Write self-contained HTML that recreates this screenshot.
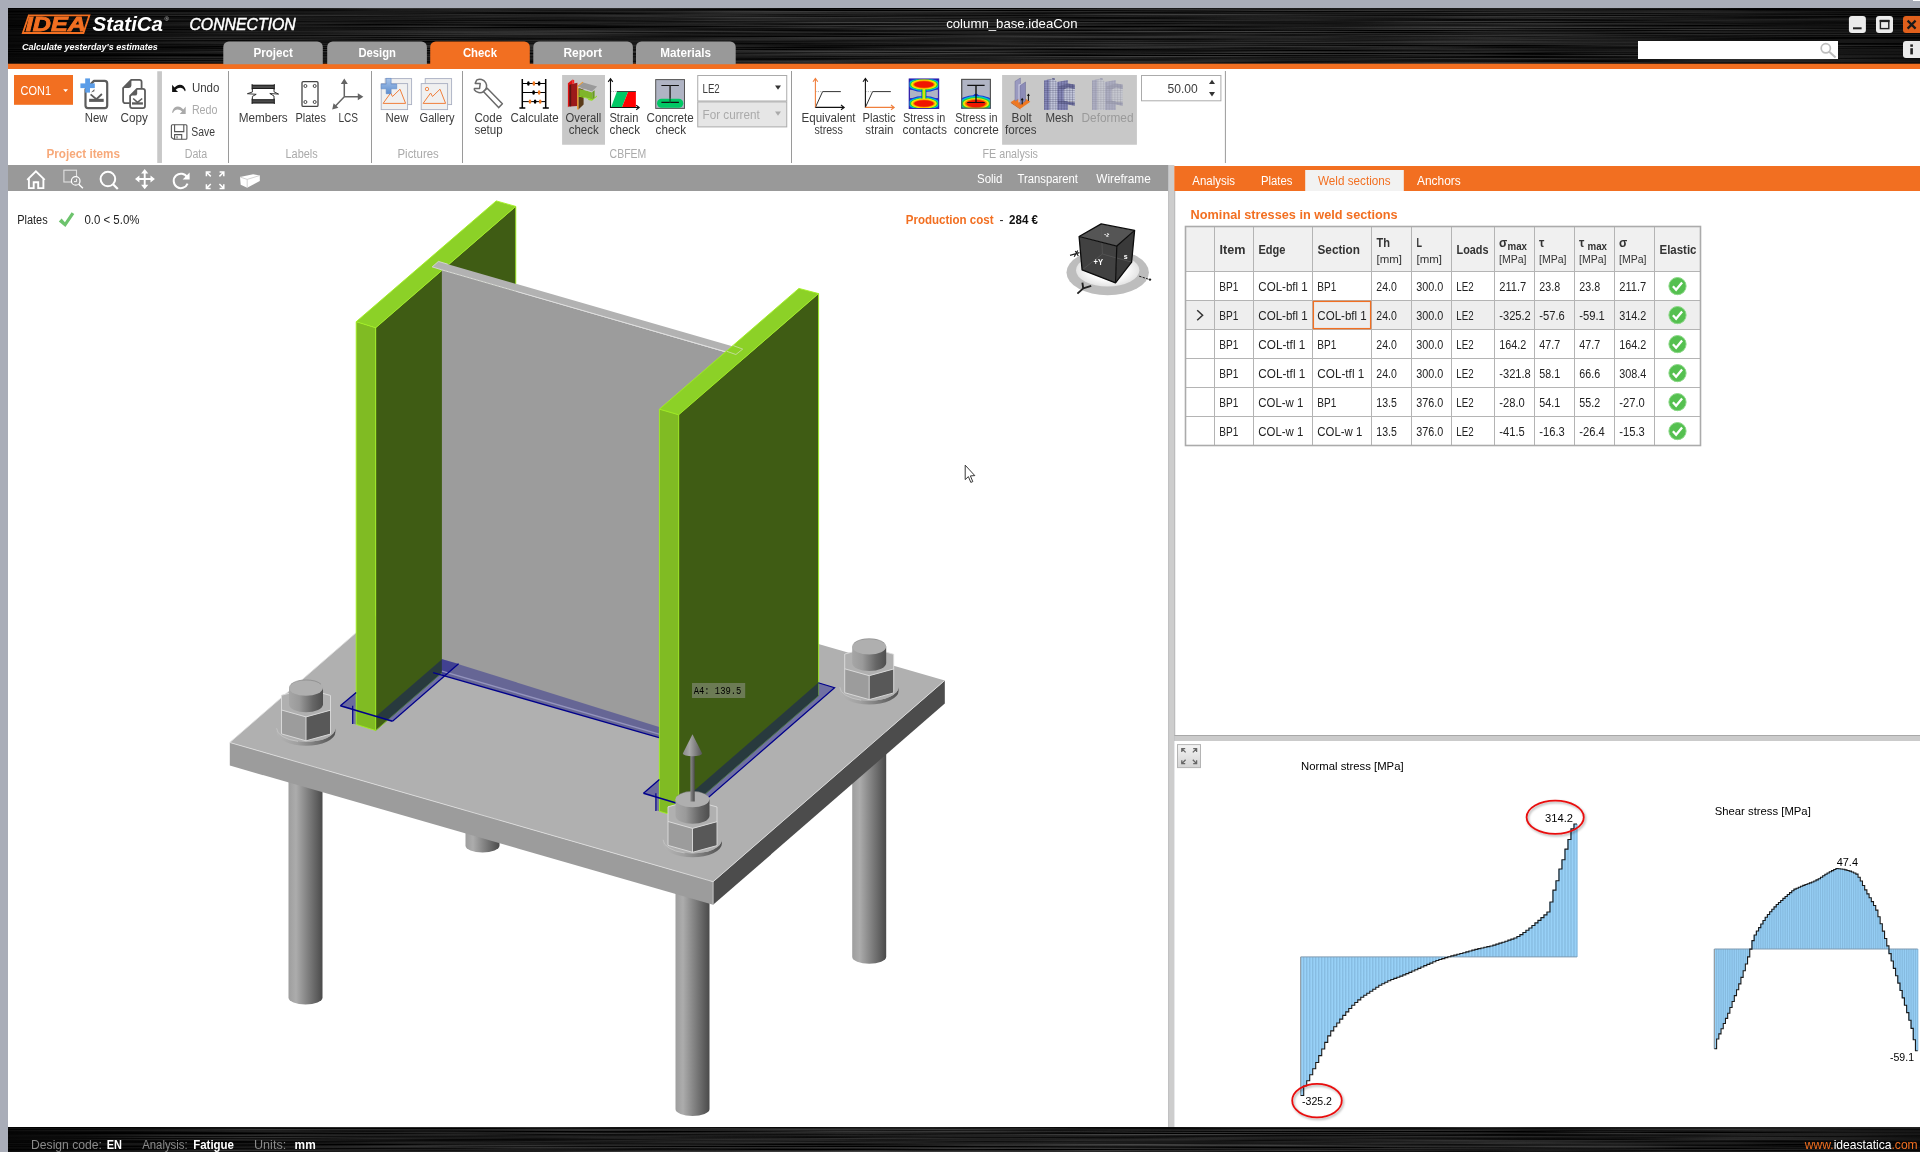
<!DOCTYPE html>
<html lang="en"><head><meta charset="utf-8"><title>IDEA StatiCa Connection - column_base.ideaCon</title>
<style>
html,body{margin:0;padding:0;background:#a9adb8;overflow:hidden}
body{width:1920px;height:1152px;position:relative;font-family:"Liberation Sans",sans-serif}
svg{position:absolute;left:0;top:0;display:block;will-change:transform}
svg text{font-family:"Liberation Sans",sans-serif;white-space:pre}
</style></head><body>
<svg width="1920" height="1152" viewBox="0 0 1920 1152">
<defs><filter id="brush" x="0" y="0" width="100%" height="100%" color-interpolation-filters="sRGB"><feTurbulence type="fractalNoise" baseFrequency="0.003 0.95" numOctaves="3" seed="11" result="n"/><feColorMatrix in="n" type="matrix" values="0.46 0 0 0 -0.11  0.46 0 0 0 -0.11  0.46 0 0 0 -0.11  0 0 0 0 1" /></filter><linearGradient id="hdrg" x1="0" x2="1" y1="0" y2="0"><stop offset="0" stop-color="#000" stop-opacity="0.75"/><stop offset="0.12" stop-color="#000" stop-opacity="0.25"/><stop offset="0.5" stop-color="#000" stop-opacity="0"/><stop offset="0.9" stop-color="#000" stop-opacity="0.2"/><stop offset="1" stop-color="#000" stop-opacity="0.55"/></linearGradient></defs>
<rect x="8.00" y="8.00" width="1912.00" height="56.00" fill="#1a1a1a" />
<rect x="8.00" y="8.00" width="1912.00" height="56.00" fill="#555" filter="url(#brush)"/>
<rect x="8.00" y="8.00" width="1912.00" height="56.00" fill="url(#hdrg)" />
<rect x="8.00" y="63.70" width="1912.00" height="5.30" fill="#f26f21" />
<g transform="translate(22.2,15.3)"><polygon points="6.6,0 67.2,0 61.2,17.7 0.6,17.7" fill="none" stroke="#f26f21" stroke-width="1.8"/><text x="3.6" y="15.9" font-size="21" font-weight="bold" font-style="italic" fill="#f26f21" stroke="#f26f21" stroke-width="0.9" textLength="60" lengthAdjust="spacingAndGlyphs">IDEA</text></g>
<text x="92.50" y="31.30" font-size="21" fill="#fff" textLength="70.50" lengthAdjust="spacingAndGlyphs" font-weight="bold" font-style="italic">StatiCa</text>
<text x="164.60" y="21.20" font-size="6" fill="#ccc">®</text>
<text x="189.40" y="30.00" font-size="15.7" fill="#fff" textLength="106.40" lengthAdjust="spacingAndGlyphs" font-style="italic" stroke="#fff" stroke-width="0.45">CONNECTION</text>
<text x="21.90" y="50.00" font-size="9.6" fill="#fff" textLength="135.80" lengthAdjust="spacingAndGlyphs" font-weight="bold" font-style="italic">Calculate yesterday's estimates</text>
<text x="946.20" y="28.40" font-size="13.5" fill="#fff" textLength="131.30" lengthAdjust="spacingAndGlyphs">column_base.ideaCon</text>
<path d="M223.3,64.2 V47 a5.5,5.5 0 0 1 5.5,-5.5 H317.3 a5.5,5.5 0 0 1 5.5,5.5 V64.2 Z" fill="#999"/>
<text x="253.40" y="56.90" font-size="13" fill="#fff" textLength="39.40" lengthAdjust="spacingAndGlyphs" font-weight="bold">Project</text>
<path d="M327.2,64.2 V47 a5.5,5.5 0 0 1 5.5,-5.5 H421.4 a5.5,5.5 0 0 1 5.5,5.5 V64.2 Z" fill="#999"/>
<text x="358.40" y="56.90" font-size="13" fill="#fff" textLength="37.60" lengthAdjust="spacingAndGlyphs" font-weight="bold">Design</text>
<path d="M430.2,64.2 V47 a5.5,5.5 0 0 1 5.5,-5.5 H524.3 a5.5,5.5 0 0 1 5.5,5.5 V64.2 Z" fill="#f26f21"/>
<text x="462.90" y="56.90" font-size="13" fill="#fff" textLength="34.10" lengthAdjust="spacingAndGlyphs" font-weight="bold">Check</text>
<path d="M533.3,64.2 V47 a5.5,5.5 0 0 1 5.5,-5.5 H627.4 a5.5,5.5 0 0 1 5.5,5.5 V64.2 Z" fill="#999"/>
<text x="563.40" y="56.90" font-size="13" fill="#fff" textLength="38.50" lengthAdjust="spacingAndGlyphs" font-weight="bold">Report</text>
<path d="M636,64.2 V47 a5.5,5.5 0 0 1 5.5,-5.5 H730.2 a5.5,5.5 0 0 1 5.5,5.5 V64.2 Z" fill="#999"/>
<text x="660.30" y="56.90" font-size="13" fill="#fff" textLength="50.70" lengthAdjust="spacingAndGlyphs" font-weight="bold">Materials</text>
<rect x="1913.00" y="0.00" width="7.00" height="1.00" fill="#fff" />
<rect x="1848.90" y="16.00" width="17.00" height="17.00" fill="#ebebeb" rx="3"/>
<rect x="1853.00" y="27.30" width="8.60" height="2.00" fill="#222" />
<rect x="1876.00" y="16.00" width="17.00" height="17.00" fill="#ebebeb" rx="3"/>
<rect x="1880.4" y="20.6" width="8.4" height="8" fill="none" stroke="#222" stroke-width="1.4"/><rect x="1879.70" y="19.90" width="9.80" height="2.20" fill="#222" />
<rect x="1903.00" y="16.00" width="20.00" height="17.00" fill="#e0601c" rx="3"/>
<path d="M1907.6,20.6 L1915.6,28.6 M1915.6,20.6 L1907.6,28.6" stroke="#1a1a1a" stroke-width="2.2" fill="none"/>
<rect x="1638.00" y="41.00" width="200.00" height="18.00" fill="#fff" />
<circle cx="1825.8" cy="48.3" r="4.6" fill="none" stroke="#bdbdbd" stroke-width="1.7"/><path d="M1829,51.6 L1835.6,57.6" stroke="#bdbdbd" stroke-width="2"/>
<rect x="1903.00" y="41.00" width="20.00" height="17.00" fill="#ebebeb" rx="3"/>
<rect x="1910.30" y="48.20" width="2.60" height="6.20" fill="#222" /><rect x="1910.30" y="44.40" width="2.60" height="2.40" fill="#222" />
<rect x="8.00" y="69.00" width="1912.00" height="96.00" fill="#fff" />
<rect x="14.00" y="75.00" width="59.00" height="29.80" fill="#f26f21" />
<text x="20.60" y="94.60" font-size="12" fill="#fff" textLength="30.40" lengthAdjust="spacingAndGlyphs">CON1</text>
<polygon points="63.20,89.20 68.00,89.20 65.60,92.00" fill="#fff" stroke="none" stroke-width="1" />
<text x="84.75" y="122.00" font-size="12" fill="#3c3c3c" textLength="22.75" lengthAdjust="spacingAndGlyphs">New</text>
<text x="120.60" y="122.00" font-size="12" fill="#3c3c3c" textLength="27.30" lengthAdjust="spacingAndGlyphs">Copy</text>
<text x="46.50" y="158.30" font-size="12" fill="#f7a97a" textLength="73.50" lengthAdjust="spacingAndGlyphs" font-weight="bold">Project items</text>
<rect x="157.25" y="71.25" width="4.70" height="91.70" fill="#c8c8c8" />
<text x="191.90" y="92.40" font-size="12" fill="#3c3c3c" textLength="27.50" lengthAdjust="spacingAndGlyphs">Undo</text>
<text x="191.90" y="114.30" font-size="12" fill="#aaa" textLength="25.60" lengthAdjust="spacingAndGlyphs">Redo</text>
<text x="191.25" y="135.90" font-size="12" fill="#3c3c3c" textLength="23.75" lengthAdjust="spacingAndGlyphs">Save</text>
<text x="184.75" y="158.30" font-size="12" fill="#aaa" textLength="22.50" lengthAdjust="spacingAndGlyphs">Data</text>
<line x1="228.50" y1="71.00" x2="228.50" y2="163.00" stroke="#9a9a9a" stroke-width="1" />
<line x1="371.50" y1="71.00" x2="371.50" y2="163.00" stroke="#9a9a9a" stroke-width="1" />
<line x1="462.50" y1="71.00" x2="462.50" y2="163.00" stroke="#9a9a9a" stroke-width="1" />
<line x1="791.50" y1="71.00" x2="791.50" y2="163.00" stroke="#9a9a9a" stroke-width="1" />
<line x1="1225.40" y1="71.00" x2="1225.40" y2="163.00" stroke="#9a9a9a" stroke-width="1" />
<text x="238.75" y="122.00" font-size="12" fill="#3c3c3c" textLength="49.00" lengthAdjust="spacingAndGlyphs">Members</text>
<text x="295.50" y="122.00" font-size="12" fill="#3c3c3c" textLength="30.40" lengthAdjust="spacingAndGlyphs">Plates</text>
<text x="338.40" y="122.00" font-size="12" fill="#3c3c3c" textLength="19.60" lengthAdjust="spacingAndGlyphs">LCS</text>
<text x="285.50" y="158.30" font-size="12" fill="#aaa" textLength="32.25" lengthAdjust="spacingAndGlyphs">Labels</text>
<text x="385.50" y="122.00" font-size="12" fill="#3c3c3c" textLength="22.90" lengthAdjust="spacingAndGlyphs">New</text>
<text x="419.60" y="122.00" font-size="12" fill="#3c3c3c" textLength="35.00" lengthAdjust="spacingAndGlyphs">Gallery</text>
<text x="397.50" y="158.30" font-size="12" fill="#aaa" textLength="41.25" lengthAdjust="spacingAndGlyphs">Pictures</text>
<text x="474.40" y="122.00" font-size="12" fill="#3c3c3c" textLength="27.70" lengthAdjust="spacingAndGlyphs">Code</text>
<text x="474.40" y="134.30" font-size="12" fill="#3c3c3c" textLength="28.20" lengthAdjust="spacingAndGlyphs">setup</text>
<text x="510.60" y="122.00" font-size="12" fill="#3c3c3c" textLength="48.15" lengthAdjust="spacingAndGlyphs">Calculate</text>
<rect x="562.10" y="75.00" width="42.90" height="69.75" fill="#c8c8c8" />
<text x="565.60" y="122.00" font-size="12" fill="#3c3c3c" textLength="35.65" lengthAdjust="spacingAndGlyphs">Overall</text>
<text x="568.75" y="134.30" font-size="12" fill="#3c3c3c" textLength="30.00" lengthAdjust="spacingAndGlyphs">check</text>
<text x="609.40" y="122.00" font-size="12" fill="#3c3c3c" textLength="29.10" lengthAdjust="spacingAndGlyphs">Strain</text>
<text x="609.60" y="134.30" font-size="12" fill="#3c3c3c" textLength="30.40" lengthAdjust="spacingAndGlyphs">check</text>
<text x="646.50" y="122.00" font-size="12" fill="#3c3c3c" textLength="47.25" lengthAdjust="spacingAndGlyphs">Concrete</text>
<text x="655.60" y="134.30" font-size="12" fill="#3c3c3c" textLength="30.40" lengthAdjust="spacingAndGlyphs">check</text>
<text x="609.60" y="158.30" font-size="12" fill="#aaa" textLength="36.65" lengthAdjust="spacingAndGlyphs">CBFEM</text>
<rect x="697.75" y="75.50" width="89.00" height="25.50" fill="#fff" stroke="#ababab" stroke-width="1"/>
<text x="702.50" y="92.50" font-size="12" fill="#3c3c3c" textLength="17.25" lengthAdjust="spacingAndGlyphs">LE2</text>
<polygon points="775.00,85.40 781.00,85.40 778.00,89.80" fill="#333" stroke="none" stroke-width="1" />
<rect x="697.75" y="101.90" width="89.00" height="25.00" fill="#e6e6e6" stroke="#ababab" stroke-width="1"/>
<text x="702.50" y="118.50" font-size="12" fill="#aaa" textLength="57.25" lengthAdjust="spacingAndGlyphs">For current</text>
<polygon points="775.00,111.40 781.00,111.40 778.00,115.80" fill="#aaa" stroke="none" stroke-width="1" />
<text x="801.50" y="122.00" font-size="12" fill="#3c3c3c" textLength="54.10" lengthAdjust="spacingAndGlyphs">Equivalent</text>
<text x="814.40" y="134.30" font-size="12" fill="#3c3c3c" textLength="28.35" lengthAdjust="spacingAndGlyphs">stress</text>
<text x="862.50" y="122.00" font-size="12" fill="#3c3c3c" textLength="33.10" lengthAdjust="spacingAndGlyphs">Plastic</text>
<text x="865.25" y="134.30" font-size="12" fill="#3c3c3c" textLength="28.25" lengthAdjust="spacingAndGlyphs">strain</text>
<text x="903.10" y="122.00" font-size="12" fill="#3c3c3c" textLength="42.15" lengthAdjust="spacingAndGlyphs">Stress in</text>
<text x="902.50" y="134.30" font-size="12" fill="#3c3c3c" textLength="44.40" lengthAdjust="spacingAndGlyphs">contacts</text>
<text x="955.25" y="122.00" font-size="12" fill="#3c3c3c" textLength="42.25" lengthAdjust="spacingAndGlyphs">Stress in</text>
<text x="953.75" y="134.30" font-size="12" fill="#3c3c3c" textLength="45.00" lengthAdjust="spacingAndGlyphs">concrete</text>
<rect x="1002.10" y="75.00" width="134.80" height="69.75" fill="#c8c8c8" />
<text x="1011.50" y="122.00" font-size="12" fill="#3c3c3c" textLength="20.40" lengthAdjust="spacingAndGlyphs">Bolt</text>
<text x="1005.00" y="134.30" font-size="12" fill="#3c3c3c" textLength="31.50" lengthAdjust="spacingAndGlyphs">forces</text>
<text x="1045.40" y="122.00" font-size="12" fill="#3c3c3c" textLength="28.10" lengthAdjust="spacingAndGlyphs">Mesh</text>
<text x="1081.50" y="122.00" font-size="12" fill="#9a9a9a" textLength="52.00" lengthAdjust="spacingAndGlyphs">Deformed</text>
<text x="982.50" y="158.30" font-size="12" fill="#aaa" textLength="55.40" lengthAdjust="spacingAndGlyphs">FE analysis</text>
<rect x="1141.50" y="75.50" width="79.40" height="25.30" fill="#fff" stroke="#ababab" stroke-width="1"/>
<text x="1167.50" y="92.50" font-size="12" fill="#3c3c3c" textLength="30.25" lengthAdjust="spacingAndGlyphs">50.00</text>
<polygon points="1209.00,84.10 1215.00,84.10 1212.00,79.70" fill="#333" stroke="none" stroke-width="1" />
<polygon points="1209.00,92.00 1215.00,92.00 1212.00,96.60" fill="#333" stroke="none" stroke-width="1" />
<rect x="8.00" y="165.00" width="1160.30" height="26.00" fill="#999" />
<text x="977.00" y="183.00" font-size="12" fill="#fff" textLength="25.50" lengthAdjust="spacingAndGlyphs">Solid</text>
<text x="1017.50" y="183.00" font-size="12" fill="#fff" textLength="60.50" lengthAdjust="spacingAndGlyphs">Transparent</text>
<text x="1096.25" y="183.00" font-size="12" fill="#fff" textLength="54.50" lengthAdjust="spacingAndGlyphs">Wireframe</text>
<rect x="8.00" y="191.00" width="1160.30" height="937.00" fill="#fff" />
<rect x="1168.30" y="165.00" width="6.00" height="962.50" fill="#cdcdcd" />
<rect x="1168.30" y="191.00" width="0.80" height="936.50" fill="#bdbdbd" />
<rect x="1174.30" y="165.00" width="746.00" height="570.50" fill="#fff" />
<rect x="1174.30" y="166.00" width="746.00" height="25.00" fill="#f26f21" />
<rect x="1174.30" y="191.00" width="0.90" height="545.00" fill="#a8a8a8" />
<rect x="1305.20" y="170.00" width="98.60" height="21.00" fill="#f2f2f2" />
<text x="1192.30" y="185.20" font-size="12" fill="#fff" textLength="42.70" lengthAdjust="spacingAndGlyphs">Analysis</text>
<text x="1261.00" y="185.20" font-size="12" fill="#fff" textLength="31.30" lengthAdjust="spacingAndGlyphs">Plates</text>
<text x="1318.00" y="185.20" font-size="12" fill="#f26f21" textLength="72.60" lengthAdjust="spacingAndGlyphs">Weld sections</text>
<text x="1417.00" y="185.20" font-size="12" fill="#fff" textLength="43.80" lengthAdjust="spacingAndGlyphs">Anchors</text>
<text x="1190.60" y="218.60" font-size="13" fill="#f26f21" textLength="207.10" lengthAdjust="spacingAndGlyphs" font-weight="bold">Nominal stresses in weld sections</text>
<rect x="1174.30" y="735.00" width="746.00" height="6.00" fill="#cbcbcb" />
<rect x="1174.30" y="735.00" width="746.00" height="1.00" fill="#a8a8a8" />
<rect x="1174.30" y="741.00" width="746.00" height="386.50" fill="#fff" />
<rect x="8.00" y="1127.40" width="1912.00" height="24.60" fill="#141414" />
<rect x="8.00" y="1127.40" width="1912.00" height="24.60" fill="#555" filter="url(#brush)"/>
<rect x="8.00" y="1127.40" width="1912.00" height="24.60" fill="url(#hdrg)" />
<text x="31.00" y="1149.30" font-size="12" fill="#8a8a8a" textLength="71.00" lengthAdjust="spacingAndGlyphs">Design code:</text>
<text x="106.80" y="1149.30" font-size="12" fill="#fff" textLength="15.20" lengthAdjust="spacingAndGlyphs" font-weight="bold">EN</text>
<text x="142.20" y="1149.30" font-size="12" fill="#8a8a8a" textLength="45.50" lengthAdjust="spacingAndGlyphs">Analysis:</text>
<text x="193.20" y="1149.30" font-size="12" fill="#fff" textLength="40.80" lengthAdjust="spacingAndGlyphs" font-weight="bold">Fatigue</text>
<text x="254.00" y="1149.30" font-size="12" fill="#8a8a8a" textLength="32.20" lengthAdjust="spacingAndGlyphs">Units:</text>
<text x="294.60" y="1149.30" font-size="12" fill="#fff" textLength="21.10" lengthAdjust="spacingAndGlyphs" font-weight="bold">mm</text>
<text x="1804.8" y="1149.4" font-size="13" textLength="112.9" lengthAdjust="spacingAndGlyphs"><tspan fill="#f26f21">www.</tspan><tspan fill="#fff">ideastatica</tspan><tspan fill="#f26f21">.com</tspan></text>
<text x="17.20" y="223.75" font-size="12" fill="#222" textLength="30.50" lengthAdjust="spacingAndGlyphs">Plates</text>
<text x="84.40" y="223.75" font-size="12" fill="#222" textLength="55.10" lengthAdjust="spacingAndGlyphs">0.0 &lt; 5.0%</text>
<path d="M58.8,221.4 L61.6,218.6 L64.9,222.2 L71.6,212.2 L74.3,213.9 L65.4,227.1 Z" fill="#6dc36d"/>
<text x="905.80" y="223.70" font-size="12" fill="#f26f21" textLength="87.80" lengthAdjust="spacingAndGlyphs" font-weight="bold">Production cost</text>
<text x="999.60" y="223.70" font-size="12" fill="#222">-</text>
<text x="1009.00" y="223.70" font-size="12" fill="#111" textLength="29.00" lengthAdjust="spacingAndGlyphs" font-weight="bold">284 €</text>
<rect x="1185.50" y="226.50" width="515.00" height="219.00" fill="#fff" />
<rect x="1185.50" y="226.50" width="515.00" height="45.00" fill="#f0f0f0" />
<rect x="1185.50" y="300.50" width="515.00" height="29.00" fill="#eeeeee" />
<line x1="1214.50" y1="226.50" x2="1214.50" y2="445.50" stroke="#b4b4b4" stroke-width="1" />
<line x1="1253.50" y1="226.50" x2="1253.50" y2="445.50" stroke="#b4b4b4" stroke-width="1" />
<line x1="1312.50" y1="226.50" x2="1312.50" y2="445.50" stroke="#b4b4b4" stroke-width="1" />
<line x1="1371.50" y1="226.50" x2="1371.50" y2="445.50" stroke="#b4b4b4" stroke-width="1" />
<line x1="1411.50" y1="226.50" x2="1411.50" y2="445.50" stroke="#b4b4b4" stroke-width="1" />
<line x1="1451.50" y1="226.50" x2="1451.50" y2="445.50" stroke="#b4b4b4" stroke-width="1" />
<line x1="1494.50" y1="226.50" x2="1494.50" y2="445.50" stroke="#b4b4b4" stroke-width="1" />
<line x1="1534.50" y1="226.50" x2="1534.50" y2="445.50" stroke="#b4b4b4" stroke-width="1" />
<line x1="1574.50" y1="226.50" x2="1574.50" y2="445.50" stroke="#b4b4b4" stroke-width="1" />
<line x1="1614.50" y1="226.50" x2="1614.50" y2="445.50" stroke="#b4b4b4" stroke-width="1" />
<line x1="1654.50" y1="226.50" x2="1654.50" y2="445.50" stroke="#b4b4b4" stroke-width="1" />
<line x1="1185.50" y1="271.50" x2="1700.50" y2="271.50" stroke="#b4b4b4" stroke-width="1" />
<line x1="1185.50" y1="300.50" x2="1700.50" y2="300.50" stroke="#b4b4b4" stroke-width="1" />
<line x1="1185.50" y1="329.50" x2="1700.50" y2="329.50" stroke="#b4b4b4" stroke-width="1" />
<line x1="1185.50" y1="358.50" x2="1700.50" y2="358.50" stroke="#b4b4b4" stroke-width="1" />
<line x1="1185.50" y1="387.50" x2="1700.50" y2="387.50" stroke="#b4b4b4" stroke-width="1" />
<line x1="1185.50" y1="416.50" x2="1700.50" y2="416.50" stroke="#b4b4b4" stroke-width="1" />
<rect x="1185.5" y="226.5" width="515.0" height="219.0" fill="none" stroke="#ababab" stroke-width="1.6"/>
<text x="1219.50" y="253.60" font-size="12" fill="#333" textLength="26.00" lengthAdjust="spacingAndGlyphs" font-weight="bold">Item</text>
<text x="1258.50" y="253.60" font-size="12" fill="#333" textLength="27.00" lengthAdjust="spacingAndGlyphs" font-weight="bold">Edge</text>
<text x="1317.50" y="253.60" font-size="12" fill="#333" textLength="42.50" lengthAdjust="spacingAndGlyphs" font-weight="bold">Section</text>
<text x="1456.50" y="253.60" font-size="12" fill="#333" textLength="32.00" lengthAdjust="spacingAndGlyphs" font-weight="bold">Loads</text>
<text x="1659.50" y="253.60" font-size="12" fill="#333" textLength="37.00" lengthAdjust="spacingAndGlyphs" font-weight="bold">Elastic</text>
<text x="1376.50" y="246.60" font-size="12" fill="#333" textLength="13.50" lengthAdjust="spacingAndGlyphs" font-weight="bold">Th</text>
<text x="1376.50" y="262.80" font-size="10" fill="#333" textLength="25.50" lengthAdjust="spacingAndGlyphs">[mm]</text>
<text x="1416.50" y="246.60" font-size="12" fill="#333" textLength="5.50" lengthAdjust="spacingAndGlyphs" font-weight="bold">L</text>
<text x="1416.50" y="262.80" font-size="10" fill="#333" textLength="25.50" lengthAdjust="spacingAndGlyphs">[mm]</text>
<text x="1499.00" y="246.60" font-size="12" fill="#333" font-weight="bold">σ</text>
<text x="1507.50" y="250.00" font-size="10" fill="#333" textLength="19.50" lengthAdjust="spacingAndGlyphs" font-weight="bold">max</text>
<text x="1499.00" y="262.80" font-size="10" fill="#333" textLength="27.50" lengthAdjust="spacingAndGlyphs">[MPa]</text>
<text x="1539.00" y="246.60" font-size="12" fill="#333" font-weight="bold">τ</text>
<text x="1539.00" y="262.80" font-size="10" fill="#333" textLength="27.50" lengthAdjust="spacingAndGlyphs">[MPa]</text>
<text x="1579.00" y="246.60" font-size="12" fill="#333" font-weight="bold">τ</text>
<text x="1587.50" y="250.00" font-size="10" fill="#333" textLength="19.50" lengthAdjust="spacingAndGlyphs" font-weight="bold">max</text>
<text x="1579.00" y="262.80" font-size="10" fill="#333" textLength="27.50" lengthAdjust="spacingAndGlyphs">[MPa]</text>
<text x="1619.00" y="246.60" font-size="12" fill="#333" font-weight="bold">σ</text>
<text x="1619.00" y="262.80" font-size="10" fill="#333" textLength="27.50" lengthAdjust="spacingAndGlyphs">[MPa]</text>
<text x="1219.30" y="290.60" font-size="12" fill="#222" textLength="19.00" lengthAdjust="spacingAndGlyphs">BP1</text>
<text x="1258.30" y="290.60" font-size="12" fill="#222" textLength="49.50" lengthAdjust="spacingAndGlyphs">COL-bfl 1</text>
<text x="1317.30" y="290.60" font-size="12" fill="#222" textLength="19.00" lengthAdjust="spacingAndGlyphs">BP1</text>
<text x="1376.30" y="290.60" font-size="12" fill="#222" textLength="20.50" lengthAdjust="spacingAndGlyphs">24.0</text>
<text x="1416.30" y="290.60" font-size="12" fill="#222" textLength="27.00" lengthAdjust="spacingAndGlyphs">300.0</text>
<text x="1456.30" y="290.60" font-size="12" fill="#222" textLength="17.30" lengthAdjust="spacingAndGlyphs">LE2</text>
<text x="1499.30" y="290.60" font-size="12" fill="#222" textLength="27.00" lengthAdjust="spacingAndGlyphs">211.7</text>
<text x="1539.30" y="290.60" font-size="12" fill="#222" textLength="20.80" lengthAdjust="spacingAndGlyphs">23.8</text>
<text x="1579.30" y="290.60" font-size="12" fill="#222" textLength="20.80" lengthAdjust="spacingAndGlyphs">23.8</text>
<text x="1619.30" y="290.60" font-size="12" fill="#222" textLength="27.00" lengthAdjust="spacingAndGlyphs">211.7</text>
<circle cx="1677.5" cy="286.1" r="8.6" fill="#55c050"/><circle cx="1677.5" cy="286.1" r="8.6" fill="none" stroke="#8ad886" stroke-width="1"/>
<path d="M1672.9,286.3 L1676.1,289.70000000000005 L1682.1,282.5" fill="none" stroke="#fff" stroke-width="2.3" stroke-linecap="butt"/>
<text x="1219.30" y="319.60" font-size="12" fill="#222" textLength="19.00" lengthAdjust="spacingAndGlyphs">BP1</text>
<text x="1258.30" y="319.60" font-size="12" fill="#222" textLength="49.50" lengthAdjust="spacingAndGlyphs">COL-bfl 1</text>
<text x="1317.30" y="319.60" font-size="12" fill="#222" textLength="49.50" lengthAdjust="spacingAndGlyphs">COL-bfl 1</text>
<text x="1376.30" y="319.60" font-size="12" fill="#222" textLength="20.50" lengthAdjust="spacingAndGlyphs">24.0</text>
<text x="1416.30" y="319.60" font-size="12" fill="#222" textLength="27.00" lengthAdjust="spacingAndGlyphs">300.0</text>
<text x="1456.30" y="319.60" font-size="12" fill="#222" textLength="17.30" lengthAdjust="spacingAndGlyphs">LE2</text>
<text x="1499.30" y="319.60" font-size="12" fill="#222" textLength="31.50" lengthAdjust="spacingAndGlyphs">-325.2</text>
<text x="1539.30" y="319.60" font-size="12" fill="#222" textLength="25.50" lengthAdjust="spacingAndGlyphs">-57.6</text>
<text x="1579.30" y="319.60" font-size="12" fill="#222" textLength="25.50" lengthAdjust="spacingAndGlyphs">-59.1</text>
<text x="1619.30" y="319.60" font-size="12" fill="#222" textLength="27.00" lengthAdjust="spacingAndGlyphs">314.2</text>
<circle cx="1677.5" cy="315.1" r="8.6" fill="#55c050"/><circle cx="1677.5" cy="315.1" r="8.6" fill="none" stroke="#8ad886" stroke-width="1"/>
<path d="M1672.9,315.3 L1676.1,318.70000000000005 L1682.1,311.5" fill="none" stroke="#fff" stroke-width="2.3" stroke-linecap="butt"/>
<text x="1219.30" y="348.60" font-size="12" fill="#222" textLength="19.00" lengthAdjust="spacingAndGlyphs">BP1</text>
<text x="1258.30" y="348.60" font-size="12" fill="#222" textLength="47.00" lengthAdjust="spacingAndGlyphs">COL-tfl 1</text>
<text x="1317.30" y="348.60" font-size="12" fill="#222" textLength="19.00" lengthAdjust="spacingAndGlyphs">BP1</text>
<text x="1376.30" y="348.60" font-size="12" fill="#222" textLength="20.50" lengthAdjust="spacingAndGlyphs">24.0</text>
<text x="1416.30" y="348.60" font-size="12" fill="#222" textLength="27.00" lengthAdjust="spacingAndGlyphs">300.0</text>
<text x="1456.30" y="348.60" font-size="12" fill="#222" textLength="17.30" lengthAdjust="spacingAndGlyphs">LE2</text>
<text x="1499.30" y="348.60" font-size="12" fill="#222" textLength="27.00" lengthAdjust="spacingAndGlyphs">164.2</text>
<text x="1539.30" y="348.60" font-size="12" fill="#222" textLength="20.80" lengthAdjust="spacingAndGlyphs">47.7</text>
<text x="1579.30" y="348.60" font-size="12" fill="#222" textLength="20.80" lengthAdjust="spacingAndGlyphs">47.7</text>
<text x="1619.30" y="348.60" font-size="12" fill="#222" textLength="27.00" lengthAdjust="spacingAndGlyphs">164.2</text>
<circle cx="1677.5" cy="344.1" r="8.6" fill="#55c050"/><circle cx="1677.5" cy="344.1" r="8.6" fill="none" stroke="#8ad886" stroke-width="1"/>
<path d="M1672.9,344.3 L1676.1,347.70000000000005 L1682.1,340.5" fill="none" stroke="#fff" stroke-width="2.3" stroke-linecap="butt"/>
<text x="1219.30" y="377.60" font-size="12" fill="#222" textLength="19.00" lengthAdjust="spacingAndGlyphs">BP1</text>
<text x="1258.30" y="377.60" font-size="12" fill="#222" textLength="47.00" lengthAdjust="spacingAndGlyphs">COL-tfl 1</text>
<text x="1317.30" y="377.60" font-size="12" fill="#222" textLength="47.00" lengthAdjust="spacingAndGlyphs">COL-tfl 1</text>
<text x="1376.30" y="377.60" font-size="12" fill="#222" textLength="20.50" lengthAdjust="spacingAndGlyphs">24.0</text>
<text x="1416.30" y="377.60" font-size="12" fill="#222" textLength="27.00" lengthAdjust="spacingAndGlyphs">300.0</text>
<text x="1456.30" y="377.60" font-size="12" fill="#222" textLength="17.30" lengthAdjust="spacingAndGlyphs">LE2</text>
<text x="1499.30" y="377.60" font-size="12" fill="#222" textLength="31.50" lengthAdjust="spacingAndGlyphs">-321.8</text>
<text x="1539.30" y="377.60" font-size="12" fill="#222" textLength="20.80" lengthAdjust="spacingAndGlyphs">58.1</text>
<text x="1579.30" y="377.60" font-size="12" fill="#222" textLength="20.80" lengthAdjust="spacingAndGlyphs">66.6</text>
<text x="1619.30" y="377.60" font-size="12" fill="#222" textLength="27.00" lengthAdjust="spacingAndGlyphs">308.4</text>
<circle cx="1677.5" cy="373.1" r="8.6" fill="#55c050"/><circle cx="1677.5" cy="373.1" r="8.6" fill="none" stroke="#8ad886" stroke-width="1"/>
<path d="M1672.9,373.3 L1676.1,376.70000000000005 L1682.1,369.5" fill="none" stroke="#fff" stroke-width="2.3" stroke-linecap="butt"/>
<text x="1219.30" y="406.60" font-size="12" fill="#222" textLength="19.00" lengthAdjust="spacingAndGlyphs">BP1</text>
<text x="1258.30" y="406.60" font-size="12" fill="#222" textLength="45.00" lengthAdjust="spacingAndGlyphs">COL-w 1</text>
<text x="1317.30" y="406.60" font-size="12" fill="#222" textLength="19.00" lengthAdjust="spacingAndGlyphs">BP1</text>
<text x="1376.30" y="406.60" font-size="12" fill="#222" textLength="20.50" lengthAdjust="spacingAndGlyphs">13.5</text>
<text x="1416.30" y="406.60" font-size="12" fill="#222" textLength="27.00" lengthAdjust="spacingAndGlyphs">376.0</text>
<text x="1456.30" y="406.60" font-size="12" fill="#222" textLength="17.30" lengthAdjust="spacingAndGlyphs">LE2</text>
<text x="1499.30" y="406.60" font-size="12" fill="#222" textLength="25.50" lengthAdjust="spacingAndGlyphs">-28.0</text>
<text x="1539.30" y="406.60" font-size="12" fill="#222" textLength="20.80" lengthAdjust="spacingAndGlyphs">54.1</text>
<text x="1579.30" y="406.60" font-size="12" fill="#222" textLength="20.80" lengthAdjust="spacingAndGlyphs">55.2</text>
<text x="1619.30" y="406.60" font-size="12" fill="#222" textLength="25.50" lengthAdjust="spacingAndGlyphs">-27.0</text>
<circle cx="1677.5" cy="402.1" r="8.6" fill="#55c050"/><circle cx="1677.5" cy="402.1" r="8.6" fill="none" stroke="#8ad886" stroke-width="1"/>
<path d="M1672.9,402.3 L1676.1,405.70000000000005 L1682.1,398.5" fill="none" stroke="#fff" stroke-width="2.3" stroke-linecap="butt"/>
<text x="1219.30" y="435.60" font-size="12" fill="#222" textLength="19.00" lengthAdjust="spacingAndGlyphs">BP1</text>
<text x="1258.30" y="435.60" font-size="12" fill="#222" textLength="45.00" lengthAdjust="spacingAndGlyphs">COL-w 1</text>
<text x="1317.30" y="435.60" font-size="12" fill="#222" textLength="45.00" lengthAdjust="spacingAndGlyphs">COL-w 1</text>
<text x="1376.30" y="435.60" font-size="12" fill="#222" textLength="20.50" lengthAdjust="spacingAndGlyphs">13.5</text>
<text x="1416.30" y="435.60" font-size="12" fill="#222" textLength="27.00" lengthAdjust="spacingAndGlyphs">376.0</text>
<text x="1456.30" y="435.60" font-size="12" fill="#222" textLength="17.30" lengthAdjust="spacingAndGlyphs">LE2</text>
<text x="1499.30" y="435.60" font-size="12" fill="#222" textLength="25.50" lengthAdjust="spacingAndGlyphs">-41.5</text>
<text x="1539.30" y="435.60" font-size="12" fill="#222" textLength="25.50" lengthAdjust="spacingAndGlyphs">-16.3</text>
<text x="1579.30" y="435.60" font-size="12" fill="#222" textLength="25.50" lengthAdjust="spacingAndGlyphs">-26.4</text>
<text x="1619.30" y="435.60" font-size="12" fill="#222" textLength="25.50" lengthAdjust="spacingAndGlyphs">-15.3</text>
<circle cx="1677.5" cy="431.1" r="8.6" fill="#55c050"/><circle cx="1677.5" cy="431.1" r="8.6" fill="none" stroke="#8ad886" stroke-width="1"/>
<path d="M1672.9,431.3 L1676.1,434.70000000000005 L1682.1,427.5" fill="none" stroke="#fff" stroke-width="2.3" stroke-linecap="butt"/>
<path d="M1197.2,310.2 L1202.6,315.2 L1197.2,320.2" fill="none" stroke="#333" stroke-width="1.5"/>
<rect x="1313.4" y="301.4" width="57.2" height="27.2" fill="none" stroke="#f26f21" stroke-width="1.3"/>
<path d="M94,80.9 H104.6 a2.6,2.6 0 0 1 2.6,2.6 V105.5 a2.6,2.6 0 0 1 -2.6,2.6 H88.1 a2.6,2.6 0 0 1 -2.6,-2.6 V89.4 Z" fill="none" stroke="#5c5c5c" stroke-width="2.2" stroke-linejoin="round"/><rect x="89.10" y="98.80" width="14.60" height="3.10" fill="#5c5c5c" /><path d="M90.6,94.4 L96.4,99.2 L101.9,94" fill="none" stroke="#5c5c5c" stroke-width="1.8"/><path d="M91,92.6 L94.4,91.2 L94.4,89 Z" fill="#5c5c5c"/><rect x="80.40" y="83.40" width="14.40" height="4.70" fill="#5b9de8" /><rect x="85.20" y="78.40" width="4.80" height="14.20" fill="#5b9de8" />
<path d="M131.2,79.9 H139.4 a2.2,2.2 0 0 1 2.2,2.2 V101 a2.2,2.2 0 0 1 -2.2,2.2 H125.3 a2.2,2.2 0 0 1 -2.2,-2.2 V88.2 Z" fill="#fff" stroke="#5c5c5c" stroke-width="1.8" stroke-linejoin="round"/><path d="M123.4,88 L131.4,79.9 V85.6 a2.4,2.4 0 0 1 -2.4,2.4 Z" fill="#5c5c5c"/><path d="M137,88.9 H142.9 a2.1,2.1 0 0 1 2.1,2.1 V106 a2.1,2.1 0 0 1 -2.1,2.1 H132.2 a2.1,2.1 0 0 1 -2.1,-2.1 V95.8 Z" fill="#fff" stroke="#5c5c5c" stroke-width="1.8" stroke-linejoin="round"/><path d="M130.3,95.6 L137.2,88.9 V93.4 a2.2,2.2 0 0 1 -2.2,2.2 Z" fill="#5c5c5c"/><rect x="132.00" y="102.30" width="10.90" height="2.30" fill="#5c5c5c" /><path d="M133.2,98.5 L137.5,102.4 L142.2,98.5" fill="none" stroke="#5c5c5c" stroke-width="1.5"/>
<path d="M0,0.6 L0,7.9 L6,7.9 L3.6,5.6 C6.2,2.9 10.6,2.4 12.6,6.8 C13.2,7.4 13.6,6.4 13.4,5.4 C12.4,0.2 6.2,-1.6 2.4,3.4 Z" fill="#111" transform="translate(172.1,84.2)"/>
<path d="M0,0.6 L0,7.9 L6,7.9 L3.6,5.6 C6.2,2.9 10.6,2.4 12.6,6.8 C13.2,7.4 13.6,6.4 13.4,5.4 C12.4,0.2 6.2,-1.6 2.4,3.4 Z" fill="#aaa" transform="translate(185.7,106) scale(-1,1)"/>
<path d="M172.4,124.7 H185.9 a1,1 0 0 1 1,1 V138.3 a1,1 0 0 1 -1,1 H173.8 L171.4,137.4 V125.7 a1,1 0 0 1 1,-1 Z" fill="#fff" stroke="#555" stroke-width="1.1"/><path d="M174.6,124.7 V131.6 H183.8 V124.7" fill="none" stroke="#555" stroke-width="1.1"/><path d="M174.6,139.3 V134.6 H181.7 V139.3" fill="none" stroke="#555" stroke-width="1.1"/><rect x="176.20" y="136.20" width="1.70" height="2.40" fill="#999" />
<rect x="251.90" y="84.90" width="22.60" height="3.80" fill="#4a4a4a" /><line x1="251.90" y1="85.20" x2="274.50" y2="85.20" stroke="#111" stroke-width="0.8" /><line x1="251.90" y1="88.50" x2="274.50" y2="88.50" stroke="#111" stroke-width="0.9" /><line x1="252.10" y1="84.10" x2="252.10" y2="89.50" stroke="#222" stroke-width="1" /><line x1="274.30" y1="84.10" x2="274.30" y2="89.50" stroke="#222" stroke-width="1" /><rect x="251.90" y="99.40" width="22.60" height="3.80" fill="#4a4a4a" /><line x1="251.90" y1="99.70" x2="274.50" y2="99.70" stroke="#111" stroke-width="0.8" /><line x1="251.90" y1="103.00" x2="274.50" y2="103.00" stroke="#111" stroke-width="0.9" /><line x1="252.10" y1="98.60" x2="252.10" y2="104.00" stroke="#222" stroke-width="1" /><line x1="274.30" y1="98.60" x2="274.30" y2="104.00" stroke="#222" stroke-width="1" /><path d="M252.4,88.8 V92 L247.4,93.7 L256.2,94.3 L252.4,96.4 V99.3" fill="none" stroke="#222" stroke-width="0.9"/><path d="M274,88.8 V91.8 L278.6,94.1 L269.8,93.5 L274,96 V99.3" fill="none" stroke="#222" stroke-width="0.9"/>
<rect x="302" y="81.6" width="16" height="24.8" rx="1.2" fill="#fff" stroke="#444" stroke-width="1.3"/><circle cx="305.4" cy="86" r="1.5" fill="none" stroke="#333" stroke-width="0.9"/><circle cx="305.4" cy="102" r="1.5" fill="none" stroke="#333" stroke-width="0.9"/><circle cx="314.7" cy="86" r="1.5" fill="none" stroke="#333" stroke-width="0.9"/><circle cx="314.7" cy="102" r="1.5" fill="none" stroke="#333" stroke-width="0.9"/>
<path d="M344.3,96.7 V82 M344.3,96.7 H359 M344.3,96.7 L335,106.5" stroke="#646464" stroke-width="1.5" fill="none"/><path d="M344.3,78.5 L347.8,84 H340.8 Z M363.4,96.7 L357.8,100.2 V93.2 Z M332.2,109.4 L333.6,103.2 L338.4,107.8 Z" fill="#646464"/>
<rect x="385.2" y="78.6" width="26.4" height="26" fill="#f0f0f0" stroke="#a9afc2" stroke-width="0.9"/><rect x="381.2" y="83.6" width="26.4" height="26" fill="#f0f0f0" stroke="#a9afc2" stroke-width="0.9"/><path d="M383.09999999999997,103.4 L390.59999999999997,93 L392.5,96.5 L400.0,89.2 L405.59999999999997,103.4 Z" fill="none" stroke="#f07f3c" stroke-width="1"/><defs><linearGradient id="plg" x1="0" x2="0" y1="0" y2="1"><stop offset="0" stop-color="#a9c4e8"/><stop offset="1" stop-color="#5f8fd0"/></linearGradient></defs><path d="M386.2,78.4 h4.9 v5.7 h5.6 v4.7 h-5.6 v4.9 h-4.9 v-4.9 h-5 v-4.7 h5 Z" fill="url(#plg)" stroke="#5a86c8" stroke-width="0.6"/>
<rect x="425.2" y="78.6" width="26.4" height="26" fill="#f0f0f0" stroke="#a9afc2" stroke-width="0.9"/><rect x="421.2" y="83.6" width="26.4" height="26" fill="#f0f0f0" stroke="#a9afc2" stroke-width="0.9"/><path d="M423.09999999999997,103.4 L430.59999999999997,93 L432.5,96.5 L440.0,89.2 L445.59999999999997,103.4 Z" fill="none" stroke="#f07f3c" stroke-width="1"/><circle cx="427.0" cy="89" r="1.7" fill="none" stroke="#f07f3c" stroke-width="0.9"/>
<path d="M476.6,80.2 A6.7,6.7 0 1 1 474.4,89.8 L474.4,88.4 L479.6,88.4 L480.2,83.6 L475.2,83.4 Z" fill="#fff" stroke="#6a6a6a" stroke-width="1.5" stroke-linejoin="round" transform="rotate(0)"/><path d="M483.4,91.6 L487.2,88.2 L502.4,103.8 L498.6,107.6 Z" fill="#fff" stroke="#6a6a6a" stroke-width="1.5" stroke-linejoin="round"/>
<path d="M522.3,79.1 V107.6 M545.7,79.1 V107.6 M519.4,107.9 H525.3 M542.8,107.9 H548.8" stroke="#000" stroke-width="1.5" fill="none"/><path d="M522.3,83.5 H545.7 M522.3,92.5 H545.7 M522.3,101.6 H545.7" stroke="#000" stroke-width="1" fill="none"/><ellipse cx="528.4" cy="83.5" rx="1.35" ry="2.2" fill="#000"/><ellipse cx="533.9" cy="83.5" rx="1.35" ry="2.2" fill="#f07820"/><ellipse cx="539.1" cy="83.5" rx="1.35" ry="2.2" fill="#000"/><ellipse cx="533.6" cy="92.5" rx="1.35" ry="2.2" fill="#000"/><ellipse cx="539.1" cy="92.5" rx="1.35" ry="2.2" fill="#f07820"/><ellipse cx="530" cy="101.6" rx="1.35" ry="2.2" fill="#f07820"/><ellipse cx="535.1" cy="101.6" rx="1.35" ry="2.2" fill="#000"/><ellipse cx="540.2" cy="101.6" rx="1.35" ry="2.2" fill="#f07820"/>
<polygon points="567.90,83.30 572.60,79.40 572.60,103.60 567.90,107.20" fill="#e01414" stroke="none" stroke-width="1" /><polygon points="569.40,84.40 577.40,82.80 577.40,106.00 569.40,106.40" fill="#9c1a1a" stroke="none" stroke-width="1" /><polygon points="569.40,85.00 571.20,84.60 571.20,106.20 569.40,106.40" fill="#5a1414" stroke="none" stroke-width="1" /><polygon points="572.60,79.40 574.20,80.20 574.20,83.40 572.60,83.80" fill="#ff2020" stroke="none" stroke-width="1" /><polygon points="578.40,88.40 583.60,87.00 583.60,104.60 578.40,109.40" fill="#5a3a1a" stroke="none" stroke-width="1" /><polygon points="577.20,86.20 582.60,81.80 583.40,82.20 578.40,86.80 578.40,109.80 577.20,109.20" fill="#f0961e" stroke="none" stroke-width="1" /><polygon points="579.20,89.00 592.40,92.00 592.40,99.40 579.20,95.80" fill="#7fb52a" stroke="none" stroke-width="1" /><polygon points="578.20,95.40 592.00,99.20 597.00,95.40 597.00,96.60 592.00,100.80 588.20,100.00 588.20,98.80 578.20,96.40" fill="#8fe01a" stroke="none" stroke-width="1" /><polygon points="592.40,92.00 594.60,90.20 594.60,97.40 592.40,99.40" fill="#6a9a22" stroke="none" stroke-width="1" /><polygon points="578.10,86.80 583.20,82.40 597.10,86.40 592.00,91.50" fill="#9a9a9a" stroke="none" stroke-width="1" /><polygon points="578.10,86.80 592.00,91.50 592.00,92.40 578.10,87.80" fill="#c8c8c8" stroke="none" stroke-width="1" />
<polygon points="611.10,107.20 616.90,91.50 628.20,91.50 622.00,107.20" fill="#00c864" stroke="none" stroke-width="1" /><polygon points="622.00,107.20 628.20,91.50 635.90,91.50 635.90,107.20" fill="#ff0000" stroke="none" stroke-width="1" /><line x1="616.90" y1="91.50" x2="635.90" y2="91.50" stroke="#333" stroke-width="0.9" /><line x1="610.50" y1="91.50" x2="616.90" y2="91.50" stroke="#999" stroke-width="0.8" stroke-dasharray="1.2 1.2"/><path d="M610.5,79 V107.5 H638.8 M608.2,81.8 L610.5,78.7 L612.8,81.8 M636.2,105.2 L639.2,107.5 L636.2,109.8" stroke="#111" stroke-width="1.1" fill="none"/>
<rect x="655.7" y="79.6" width="28.8" height="28.8" fill="#b0b4c4" stroke="#555" stroke-width="1"/><rect x="657" y="98.8" width="26.3" height="8.9" rx="4.45" fill="#00c864"/><path d="M661.4,85.5 H678.9 M661.4,102.4 H678.9" stroke="#111" stroke-width="1.2"/><path d="M670.1,85.5 V98.8" stroke="#333" stroke-width="1.6"/><path d="M670.1,98.8 V102.4" stroke="#0a6a3a" stroke-width="1.6"/>
<path d="M27.2,179.9 L35.9,171.4 L44.7,179.9 M28.9,178.6 V188.1 H33.7 V182.2 H38.2 V188.1 H43.4 V178.6" fill="none" stroke="#fff" stroke-width="1.9" stroke-linejoin="miter"/><rect x="63.9" y="170.2" width="12.6" height="11.8" fill="none" stroke="#e0e0e0" stroke-width="1.1"/><circle cx="75.7" cy="180.9" r="4.3" fill="#999" stroke="#fff" stroke-width="1.2"/><path d="M78.8,184.2 L82.9,188.2" stroke="#fff" stroke-width="1.4"/><path d="M76.6,178.8 V181.6 H74" stroke="#fff" stroke-width="0.9" fill="none"/><circle cx="107.9" cy="179" r="7.3" fill="none" stroke="#fff" stroke-width="2"/><path d="M113,184.2 L117.8,189" stroke="#fff" stroke-width="2.2"/><path d="M137.5,179 H152.3 M144.7,171.4 V186.8" stroke="#fff" stroke-width="1.9" fill="none"/><path d="M144.7,169 L148.3,173.4 H141.1 Z M144.7,189.2 L148.3,184.8 H141.1 Z M135,179 L139.4,175.4 V182.6 Z M154.9,179 L150.5,175.4 V182.6 Z" fill="#fff"/><path d="M187.2,177.4 A7.2,7.2 0 1 0 187.6,183.6" fill="none" stroke="#fff" stroke-width="2"/><path d="M189.6,172.4 V179.6 H182.6 Z" fill="#fff"/><path d="M210.8,176.4 L206.4,172 M210.6,172 H206.4 V176.2" stroke="#fff" stroke-width="1.5" fill="none"/><path d="M219.4,176.4 L223.8,172 M219.60000000000002,172 H223.8 V176.2" stroke="#fff" stroke-width="1.5" fill="none"/><path d="M210.8,184.0 L206.4,188.4 M210.6,188.4 H206.4 V184.20000000000002" stroke="#fff" stroke-width="1.5" fill="none"/><path d="M219.4,184.0 L223.8,188.4 M219.60000000000002,188.4 H223.8 V184.20000000000002" stroke="#fff" stroke-width="1.5" fill="none"/><polygon points="240.00,177.00 253.10,174.20 259.80,175.50 259.80,180.90 247.20,187.70 240.70,184.80" fill="#fff" stroke="none" stroke-width="1" /><path d="M240,177 L247.2,179.4 L259.8,175.5 M247.2,179.4 V187.7" stroke="#c8c8c8" stroke-width="0.8" fill="none"/>
<defs><radialGradient id="heat" cx="0.5" cy="0.5" r="0.5"><stop offset="0" stop-color="#f01400"/><stop offset="0.52" stop-color="#f01400"/><stop offset="0.62" stop-color="#ffe000"/><stop offset="0.74" stop-color="#20d040"/><stop offset="0.84" stop-color="#00c0e0"/><stop offset="0.93" stop-color="#1a30d0"/><stop offset="1" stop-color="#2a10a0" stop-opacity="0"/></radialGradient><clipPath id="cl1"><rect x="909.1" y="78.9" width="29.7" height="29.7"/></clipPath><clipPath id="cl2"><rect x="961.2" y="78.9" width="29.7" height="29.7"/></clipPath><filter id="b04"><feGaussianBlur stdDeviation="0.45"/></filter><pattern id="mesh" width="2.8" height="2.2" patternUnits="userSpaceOnUse"><path d="M0,0 H2.8 M0,0 V2.2" stroke="#2c2c50" stroke-width="0.55" stroke-opacity="0.8" fill="none"/></pattern></defs>
<path d="M815.4,107.4 L822.6,91.6 H840.8" stroke="#333" stroke-width="1" fill="none"/><line x1="815.40" y1="91.60" x2="822.60" y2="91.60" stroke="#999" stroke-width="0.8" stroke-dasharray="1.2 1.2"/><path d="M815.4,107.4 V78.8 M813.0,81.8 L815.4,78.5 L817.8,81.8" stroke="#f07f3c" stroke-width="1.1" fill="none"/><path d="M815.4,107.4 H843.8 M841.0,105 L844.1999999999999,107.4 L841.0,109.8" stroke="#111" stroke-width="1.1" fill="none"/>
<path d="M865.4,107.4 L872.6,91.6 H890.8" stroke="#333" stroke-width="1" fill="none"/><line x1="865.40" y1="91.60" x2="872.60" y2="91.60" stroke="#999" stroke-width="0.8" stroke-dasharray="1.2 1.2"/><path d="M865.4,107.4 V78.8 M863.0,81.8 L865.4,78.5 L867.8,81.8" stroke="#111" stroke-width="1.1" fill="none"/><path d="M865.4,107.4 H893.8 M891.0,105 L894.1999999999999,107.4 L891.0,109.8" stroke="#f07f3c" stroke-width="1.1" fill="none"/>
<rect x="909.10" y="78.90" width="29.70" height="29.70" fill="#2a18a8" /><rect x="910.00" y="89.60" width="27.90" height="8.60" fill="#b0b4c4" /><g clip-path="url(#cl1)"><g filter="url(#b04)"><ellipse cx="923.9" cy="84.5" rx="17.4" ry="7.4" fill="#1a38d8"/><ellipse cx="923.9" cy="84.5" rx="15.6" ry="6.5" fill="#00c4dc"/><ellipse cx="923.9" cy="84.5" rx="14.2" ry="5.8" fill="#20d040"/><ellipse cx="923.9" cy="84.5" rx="12.6" ry="4.9" fill="#f4e400"/><ellipse cx="923.9" cy="84.5" rx="11" ry="4" fill="#f88000"/><ellipse cx="923.9" cy="84.5" rx="9.8" ry="3.2" fill="#f01400"/><ellipse cx="923.9" cy="103.5" rx="17.4" ry="7.4" fill="#1a38d8"/><ellipse cx="923.9" cy="103.5" rx="15.6" ry="6.5" fill="#00c4dc"/><ellipse cx="923.9" cy="103.5" rx="14.2" ry="5.8" fill="#20d040"/><ellipse cx="923.9" cy="103.5" rx="12.6" ry="4.9" fill="#f4e400"/><ellipse cx="923.9" cy="103.5" rx="11" ry="4" fill="#f88000"/><ellipse cx="923.9" cy="103.5" rx="9.8" ry="3.2" fill="#f01400"/><rect x="921.40" y="87.00" width="5.00" height="14.00" fill="#1a38d8" /><rect x="921.90" y="87.00" width="4.00" height="14.00" fill="#20d040" /><rect x="922.70" y="86.00" width="2.40" height="16.00" fill="#d8e010" /><ellipse cx="923.9" cy="84.5" rx="12.6" ry="4.9" fill="#f4e400"/><ellipse cx="923.9" cy="84.5" rx="11" ry="4" fill="#f88000"/><ellipse cx="923.9" cy="84.5" rx="9.8" ry="3.2" fill="#f01400"/><ellipse cx="923.9" cy="103.5" rx="12.6" ry="4.9" fill="#f4e400"/><ellipse cx="923.9" cy="103.5" rx="11" ry="4" fill="#f88000"/><ellipse cx="923.9" cy="103.5" rx="9.8" ry="3.2" fill="#f01400"/></g></g><rect x="909.1" y="78.9" width="29.7" height="29.7" fill="none" stroke="#2a18a8" stroke-width="0.8"/>
<rect x="961.7" y="79.4" width="28.7" height="28.7" fill="#b0b4c4" stroke="#555" stroke-width="1"/><g clip-path="url(#cl2)"><g filter="url(#b04)"><ellipse cx="976" cy="98.4" rx="3.2" ry="4.6" fill="#1a38d8"/><ellipse cx="976" cy="99.4" rx="2" ry="3.6" fill="#00c4dc"/><ellipse cx="976" cy="103.6" rx="18.2" ry="8.6" fill="#1a38d8"/><ellipse cx="976" cy="103.6" rx="16.4" ry="7.5" fill="#00c4dc"/><ellipse cx="976" cy="103.6" rx="14.8" ry="6.6" fill="#20d040"/><ellipse cx="976" cy="103.6" rx="13" ry="5.6" fill="#f4e400"/><ellipse cx="976" cy="103.6" rx="11.2" ry="4.6" fill="#f88000"/><ellipse cx="976" cy="103.6" rx="9.7" ry="3.7" fill="#f01400"/></g></g><rect x="961.7" y="79.4" width="28.7" height="28.7" fill="none" stroke="#555" stroke-width="1"/><path d="M967.3,85.4 H984.6 M967.3,102.5 H984.6" stroke="#111" stroke-width="1.2"/><path d="M976,85.4 V102.5" stroke="#111" stroke-width="1.4"/>
<polygon points="1010.90,102.10 1020.40,108.80 1030.30,101.70 1020.80,95.90" fill="#f07820" stroke="none" stroke-width="1" /><polygon points="1010.90,102.10 1020.40,108.80 1020.40,109.60 1010.90,102.90" fill="#c85a10" stroke="none" stroke-width="1" /><polygon points="1015.00,81.30 1020.40,78.00 1020.40,98.10 1015.00,101.00" fill="#9a9ac0" stroke="#70709a" stroke-width="0.5" /><polygon points="1018.40,84.60 1022.00,83.40 1022.00,101.60 1018.40,102.40" fill="#c8c8e0" stroke="none" stroke-width="1" /><polygon points="1020.00,85.70 1025.50,82.00 1025.50,101.00 1020.00,104.60" fill="#8c8cb8" stroke="#66668e" stroke-width="0.5" /><path d="M1022.2,104.4 V99.4 M1028.4,100.8 V95" stroke="#111" stroke-width="1"/><path d="M1022.2,97.8 L1023.8,100.2 H1020.6 Z M1028.4,93.4 L1030,95.8 H1026.8 Z" fill="#111"/>
<g transform="translate(1044.1,0)" opacity="1.0"><polygon points="0.00,80.40 5.60,79.20 5.60,109.90 0.00,109.90" fill="#8688b8" stroke="none" stroke-width="1" /><polygon points="7.80,78.30 10.60,78.00 10.60,80.20 7.80,80.40" fill="#6c6e9c" stroke="none" stroke-width="1" /><polygon points="5.60,79.20 7.80,78.80 10.60,80.00 13.10,81.90 13.10,109.90 5.60,109.90" fill="#c2c6da" stroke="none" stroke-width="1" /><polygon points="13.10,81.90 23.70,79.90 23.70,109.90 13.10,109.90" fill="#8688b8" stroke="none" stroke-width="1" /><polygon points="19.60,88.20 30.70,87.60 30.70,101.40 19.60,101.00" fill="#c2c6da" stroke="none" stroke-width="1" /><polygon points="14.60,86.30 23.70,83.60 30.70,84.40 30.70,89.00 23.70,87.60 19.60,89.60 14.60,88.80" fill="#6c6e9c" stroke="none" stroke-width="1" /><polygon points="14.00,101.00 19.60,100.60 23.70,102.00 30.70,102.20 30.70,105.80 23.70,104.60 14.00,103.60" fill="#6c6e9c" stroke="none" stroke-width="1" /><path d="M0,80.4 L5.6,79.2 L7.8,78.3 L10.6,78 L10.6,80 L13.1,81.9 L23.7,79.9 V83.6 L30.7,84.4 V105.8 L23.7,104.6 V109.9 H0 Z" fill="url(#mesh)"/></g>
<g transform="translate(1092,0)" opacity="0.42"><polygon points="0.00,80.40 5.60,79.20 5.60,109.90 0.00,109.90" fill="#8688b8" stroke="none" stroke-width="1" /><polygon points="7.80,78.30 10.60,78.00 10.60,80.20 7.80,80.40" fill="#6c6e9c" stroke="none" stroke-width="1" /><polygon points="5.60,79.20 7.80,78.80 10.60,80.00 13.10,81.90 13.10,109.90 5.60,109.90" fill="#c2c6da" stroke="none" stroke-width="1" /><polygon points="13.10,81.90 23.70,79.90 23.70,109.90 13.10,109.90" fill="#8688b8" stroke="none" stroke-width="1" /><polygon points="19.60,88.20 30.70,87.60 30.70,101.40 19.60,101.00" fill="#c2c6da" stroke="none" stroke-width="1" /><polygon points="14.60,86.30 23.70,83.60 30.70,84.40 30.70,89.00 23.70,87.60 19.60,89.60 14.60,88.80" fill="#6c6e9c" stroke="none" stroke-width="1" /><polygon points="14.00,101.00 19.60,100.60 23.70,102.00 30.70,102.20 30.70,105.80 23.70,104.60 14.00,103.60" fill="#6c6e9c" stroke="none" stroke-width="1" /><path d="M0,80.4 L5.6,79.2 L7.8,78.3 L10.6,78 L10.6,80 L13.1,81.9 L23.7,79.9 V83.6 L30.7,84.4 V105.8 L23.7,104.6 V109.9 H0 Z" fill="url(#mesh)"/></g>
<defs><linearGradient id="rodg" x1="0" x2="1" y1="0" y2="0" gradientUnits="objectBoundingBox"><stop offset="0" stop-color="#9e9e9e"/><stop offset="0.22" stop-color="#acacac"/><stop offset="0.55" stop-color="#828282"/><stop offset="1" stop-color="#4a4a4a"/></linearGradient><linearGradient id="stubg" x1="0" x2="1" y1="0" y2="0"><stop offset="0" stop-color="#a6a6a6"/><stop offset="0.3" stop-color="#9a9a9a"/><stop offset="0.7" stop-color="#666"/><stop offset="1" stop-color="#4e4e4e"/></linearGradient><linearGradient id="washg" x1="0" x2="1" y1="0" y2="0"><stop offset="0" stop-color="#b4b4b4"/><stop offset="0.35" stop-color="#a0a0a0"/><stop offset="1" stop-color="#505050"/></linearGradient><linearGradient id="coneg" x1="0" x2="1" y1="0" y2="0"><stop offset="0" stop-color="#8a8a8a"/><stop offset="0.35" stop-color="#a8a8a8"/><stop offset="1" stop-color="#555"/></linearGradient><linearGradient id="shaftg" x1="0" x2="1" y1="0" y2="0"><stop offset="0" stop-color="#8a8a8a"/><stop offset="1" stop-color="#4c4c4c"/></linearGradient><clipPath id="vp"><rect x="8" y="191" width="1160.3" height="934"/></clipPath></defs>
<g clip-path="url(#vp)">
<path d="M465.5,800 V845.6 A17.0,7.0 0 0 0 499.5,845.6 V800 Z" fill="url(#rodg)" transform="translate(0,0)" style="--cx:482.5"/>
<path d="M288.5,740 V997.6 A17.0,7.0 0 0 0 322.5,997.6 V740 Z" fill="url(#rodg)" transform="translate(0,0)" style="--cx:305.5"/>
<path d="M852.2,700 V956.8 A17.0,7.0 0 0 0 886.2,956.8 V700 Z" fill="url(#rodg)" transform="translate(0,0)" style="--cx:869.2"/>
<path d="M675.5,850 V1109.0 A17.0,7.0 0 0 0 709.5,1109.0 V850 Z" fill="url(#rodg)" transform="translate(0,0)" style="--cx:692.5"/>
<polygon points="229.80,742.50 713.10,881.70 713.10,904.80 229.80,765.60" fill="#9c9c9c" stroke="none" stroke-width="1" />
<polygon points="713.10,881.70 944.80,680.40 944.80,703.50 713.10,904.80" fill="#4c4c4c" stroke="none" stroke-width="1" />
<polygon points="229.80,742.50 713.10,881.70 944.80,680.40 461.50,541.20" fill="#b0b0b0" stroke="none" stroke-width="1" />
<polyline points="461.50,541.20 229.80,742.50 713.10,881.70 944.80,680.40" fill="none" stroke="#dcdcdc" stroke-width="0.9" />
<line x1="713.10" y1="881.70" x2="713.10" y2="904.80" stroke="#d0d0d0" stroke-width="0.8" />
<polygon points="340.40,705.80 356.20,692.40 356.20,710.50" fill="#6c6c9e" stroke="none" stroke-width="1" />
<polygon points="352.70,705.80 356.20,706.80 356.20,724.40 352.70,723.40" fill="#7676a2" stroke="none" stroke-width="1" />
<polygon points="375.70,327.80 515.80,206.40 515.80,609.10 375.70,730.50" fill="#3f5c14" stroke="none" stroke-width="1" />
<polygon points="356.20,321.70 375.70,327.80 375.70,730.50 356.20,724.40" fill="#80bb23" stroke="none" stroke-width="1" />
<polygon points="356.20,321.70 496.25,200.90 515.80,206.40 375.70,327.80" fill="#8cd127" stroke="none" stroke-width="1" />
<polyline points="356.20,724.40 356.20,321.70 496.25,200.90 515.80,206.40" fill="none" stroke="#a2f01e" stroke-width="0.9" />
<polyline points="356.20,321.70 375.70,327.80 515.80,206.40" fill="none" stroke="#a2f01e" stroke-width="0.9" />
<polyline points="375.70,327.80 375.70,730.50 356.20,724.40" fill="none" stroke="#a2f01e" stroke-width="0.9" />
<line x1="515.80" y1="206.40" x2="515.80" y2="284.40" stroke="#a2f01e" stroke-width="0.9" />
<line x1="375.80" y1="730.40" x2="442.00" y2="672.80" stroke="#7ab828" stroke-width="1" />
<polygon points="441.90,270.00 740.00,356.60 740.00,761.60 441.90,675.00" fill="#9c9c9c" stroke="none" stroke-width="1" />
<polygon points="432.20,266.90 438.40,261.40 742.70,349.30 735.90,354.70" fill="#b2b2b2" stroke="none" stroke-width="1" />
<polyline points="441.90,269.90 432.20,266.90 438.40,261.40 447.80,264.20" fill="none" stroke="#d8d8d8" stroke-width="0.9" />
<line x1="441.90" y1="269.90" x2="735.90" y2="354.70" stroke="#dedede" stroke-width="1" />
<polygon points="375.80,716.60 442.00,659.30 458.60,663.75 392.50,721.25" fill="#00008b" stroke="none" stroke-width="1" fill-opacity="0.36"/>
<polygon points="441.90,659.00 660.00,727.20 660.00,737.60 441.90,674.80" fill="#00008b" stroke="none" stroke-width="1" fill-opacity="0.34"/>
<line x1="441.90" y1="671.20" x2="660.00" y2="734.40" stroke="#a0a0c8" stroke-width="1.4" opacity="0.8"/>
<line x1="433.10" y1="672.60" x2="660.00" y2="737.90" stroke="#00008b" stroke-width="1.5" />
<line x1="392.50" y1="721.25" x2="458.60" y2="663.75" stroke="#00008b" stroke-width="1.2" />
<line x1="340.40" y1="705.80" x2="392.50" y2="721.25" stroke="#00008b" stroke-width="1.6" />
<line x1="340.40" y1="705.80" x2="356.20" y2="692.40" stroke="#00008b" stroke-width="1.3" />
<line x1="352.70" y1="705.80" x2="352.70" y2="724.00" stroke="#00008b" stroke-width="1.2" />
<polygon points="643.50,793.20 659.40,779.60 659.40,798.00" fill="#6c6c9e" stroke="none" stroke-width="1" />
<polygon points="655.90,793.20 659.40,794.20 659.40,811.30 655.90,810.30" fill="#7676a2" stroke="none" stroke-width="1" />
<polygon points="678.70,414.80 818.60,293.60 818.60,695.70 678.70,816.90" fill="#3f5c14" stroke="none" stroke-width="1" />
<polygon points="659.40,409.20 678.70,414.80 678.70,816.90 659.40,811.30" fill="#80bb23" stroke="none" stroke-width="1" />
<polygon points="659.40,409.20 798.90,288.40 818.60,293.60 678.70,414.80" fill="#8cd127" stroke="none" stroke-width="1" />
<polyline points="659.40,811.30 659.40,409.20 798.90,288.40 818.60,293.60 818.60,695.70" fill="none" stroke="#a2f01e" stroke-width="0.9" />
<polyline points="659.40,409.20 678.70,414.80 818.60,293.60" fill="none" stroke="#a2f01e" stroke-width="0.9" />
<polyline points="678.70,414.80 678.70,816.90 659.40,811.30" fill="none" stroke="#a2f01e" stroke-width="0.9" />
<line x1="678.80" y1="816.90" x2="818.60" y2="695.80" stroke="#7ab828" stroke-width="1" />
<polyline points="733.30,345.60 742.70,349.10 735.90,354.50 727.00,351.40" fill="none" stroke="#c6dca0" stroke-width="0.9" />
<polygon points="679.00,803.80 818.20,682.80 834.60,687.70 695.40,808.75" fill="#00008b" stroke="none" stroke-width="1" fill-opacity="0.36"/>
<polyline points="818.20,682.80 834.60,687.70 695.40,808.75" fill="none" stroke="#00008b" stroke-width="1.2" />
<line x1="643.50" y1="793.20" x2="695.40" y2="808.75" stroke="#00008b" stroke-width="1.6" />
<line x1="643.50" y1="793.20" x2="659.40" y2="779.60" stroke="#00008b" stroke-width="1.3" />
<line x1="655.90" y1="793.20" x2="655.90" y2="811.00" stroke="#00008b" stroke-width="1.2" />
<g transform="translate(306.00,687.80)"><path d="M-29.4,40.5 A29.4,13.6 0 0 0 29.4,40.5 V44.3 A29.4,13.6 0 0 1 -29.4,44.3 Z" fill="url(#washg)"/><ellipse cx="0" cy="40.5" rx="29.4" ry="13.6" fill="#b0b0b0"/><path d="M-29.4,40.5 A29.4,13.6 0 0 0 -8,53.6" fill="none" stroke="#c4c4c4" stroke-width="0.9"/><polygon points="-24.5,22.2 0,29.1 0,53 -24.5,46.1" fill="#9c9c9c"/><polygon points="0,29.1 24.5,22.4 24.5,46.3 0,53" fill="#585858"/><polygon points="-24.5,7.5 -24.5,22.2 0,29.1 24.5,22.4 24.5,7.7 0,0.8" fill="#b0b0b0"/><path d="M-24.5,7.5 V46.1 L0,53 L24.5,46.3 V7.7 L0,0.8 Z M-24.5,22.2 L0,29.1 L24.5,22.4 M0,29.1 V53" fill="none" stroke="#dedede" stroke-width="0.9" stroke-linejoin="round"/><path d="M-17,0 V16.5 A17,8 0 0 0 17,16.5 V0 Z" fill="url(#stubg)"/><ellipse cx="0" cy="0" rx="17" ry="8" fill="#afafaf"/><path d="M-15,-3.6 A17,8 0 0 1 15,-3.6" fill="none" stroke="#6a6a6a" stroke-width="0.7" opacity="0.6"/></g>
<g transform="translate(869.20,646.60)"><path d="M-29.4,40.5 A29.4,13.6 0 0 0 29.4,40.5 V44.3 A29.4,13.6 0 0 1 -29.4,44.3 Z" fill="url(#washg)"/><ellipse cx="0" cy="40.5" rx="29.4" ry="13.6" fill="#b0b0b0"/><path d="M-29.4,40.5 A29.4,13.6 0 0 0 -8,53.6" fill="none" stroke="#c4c4c4" stroke-width="0.9"/><polygon points="-24.5,22.2 0,29.1 0,53 -24.5,46.1" fill="#9c9c9c"/><polygon points="0,29.1 24.5,22.4 24.5,46.3 0,53" fill="#585858"/><polygon points="-24.5,7.5 -24.5,22.2 0,29.1 24.5,22.4 24.5,7.7 0,0.8" fill="#b0b0b0"/><path d="M-24.5,7.5 V46.1 L0,53 L24.5,46.3 V7.7 L0,0.8 Z M-24.5,22.2 L0,29.1 L24.5,22.4 M0,29.1 V53" fill="none" stroke="#dedede" stroke-width="0.9" stroke-linejoin="round"/><path d="M-17,0 V16.5 A17,8 0 0 0 17,16.5 V0 Z" fill="url(#stubg)"/><ellipse cx="0" cy="0" rx="17" ry="8" fill="#afafaf"/><path d="M-15,-3.6 A17,8 0 0 1 15,-3.6" fill="none" stroke="#6a6a6a" stroke-width="0.7" opacity="0.6"/></g>
<g transform="translate(692.50,799.30)"><path d="M-29.4,40.5 A29.4,13.6 0 0 0 29.4,40.5 V44.3 A29.4,13.6 0 0 1 -29.4,44.3 Z" fill="url(#washg)"/><ellipse cx="0" cy="40.5" rx="29.4" ry="13.6" fill="#b0b0b0"/><path d="M-29.4,40.5 A29.4,13.6 0 0 0 -8,53.6" fill="none" stroke="#c4c4c4" stroke-width="0.9"/><polygon points="-24.5,22.2 0,29.1 0,53 -24.5,46.1" fill="#9c9c9c"/><polygon points="0,29.1 24.5,22.4 24.5,46.3 0,53" fill="#585858"/><polygon points="-24.5,7.5 -24.5,22.2 0,29.1 24.5,22.4 24.5,7.7 0,0.8" fill="#b0b0b0"/><path d="M-24.5,7.5 V46.1 L0,53 L24.5,46.3 V7.7 L0,0.8 Z M-24.5,22.2 L0,29.1 L24.5,22.4 M0,29.1 V53" fill="none" stroke="#dedede" stroke-width="0.9" stroke-linejoin="round"/><path d="M-17,0 V16.5 A17,8 0 0 0 17,16.5 V0 Z" fill="url(#stubg)"/><ellipse cx="0" cy="0" rx="17" ry="8" fill="#afafaf"/><path d="M-15,-3.6 A17,8 0 0 1 15,-3.6" fill="none" stroke="#6a6a6a" stroke-width="0.7" opacity="0.6"/></g>
<rect x="690.4" y="754" width="4.3" height="47.5" fill="url(#shaftg)"/>
<path d="M692.5,734.3 L702.2,753.6 A9.7,2.6 0 0 1 682.8,753.6 Z" fill="url(#coneg)"/>
<rect x="692.00" y="683.00" width="53.20" height="15.00" fill="#6c7b55" />
<text x="693.7" y="694.2" font-size="11" fill="#000" style="font-family:Liberation Mono,monospace" textLength="47.6" lengthAdjust="spacingAndGlyphs">A4: 139.5</text>
<defs><radialGradient id="ringin" cx="0.5" cy="0.5" r="0.5"><stop offset="0.55" stop-color="#fff"/><stop offset="1" stop-color="#e4e4e4"/></radialGradient></defs>
<ellipse cx="1107.7" cy="272.4" rx="41.2" ry="22.8" fill="#bdbdbd"/>
<ellipse cx="1107.7" cy="270.2" rx="31.7" ry="16.3" fill="url(#ringin)"/>
<polygon points="1079.10,236.50 1116.80,246.00 1115.50,282.90 1082.10,269.90" fill="#414141" stroke="none" stroke-width="1" />
<polygon points="1116.80,246.00 1134.60,230.40 1131.60,262.10 1115.50,282.90" fill="#3a3a3a" stroke="none" stroke-width="1" />
<polygon points="1079.10,236.50 1101.20,223.90 1134.60,230.40 1116.80,246.00" fill="#555" stroke="none" stroke-width="1" />
<polyline points="1101.20,223.90 1102.40,254.00 1082.10,269.90" fill="none" stroke="#5a5a5a" stroke-width="0.7" />
<line x1="1102.40" y1="254.00" x2="1131.60" y2="262.10" stroke="#5a5a5a" stroke-width="0.7" />
<polygon points="1079.10,236.50 1101.20,223.90 1134.60,230.40 1131.60,262.10 1115.50,282.90 1082.10,269.90" fill="none" stroke="#0c0c0c" stroke-width="1.3" stroke-linejoin="round"/>
<polyline points="1079.10,236.50 1116.80,246.00 1134.60,230.40" fill="none" stroke="#0c0c0c" stroke-width="1.2" />
<line x1="1116.80" y1="246.00" x2="1115.50" y2="282.90" stroke="#0c0c0c" stroke-width="1.2" />
<text x="1093.50" y="264.50" font-size="8.5" fill="#fff" textLength="9.50" lengthAdjust="spacingAndGlyphs" font-weight="bold">+Y</text>
<text x="1104.50" y="236.60" font-size="6" fill="#fff" font-weight="bold" transform="rotate(18 1107 234)">-z</text>
<text x="1123.80" y="258.50" font-size="7" fill="#fff" font-weight="bold">s</text>
<path d="M1070,255.3 L1079.5,252.6 M1075.3,251 l3,5 M1077.8,250.5 l-3.6,6.2" stroke="#222" stroke-width="1.2" fill="none"/>
<path d="M1139.2,276.2 L1149.8,279.6" stroke="#222" stroke-width="1" stroke-dasharray="2.4 1.2" fill="none"/><circle cx="1150" cy="279.6" r="1.2" fill="#222"/>
<path d="M1077.4,293.6 L1083.2,288.4 L1082.4,282.6 M1083.2,288.4 L1091.2,285.8" stroke="#222" stroke-width="1.9" fill="none"/>
<path d="M965.2,465.2 V479.6 L968.4,476.6 L970.8,482.4 L972.8,481.6 L970.4,475.9 L974.8,475.6 Z" fill="#fff" stroke="#222" stroke-width="0.9" stroke-linejoin="round"/>
</g>
<defs><linearGradient id="btng" x1="0" x2="0" y1="0" y2="1"><stop offset="0" stop-color="#f4f4f4"/><stop offset="1" stop-color="#d4d4d4"/></linearGradient><filter id="sh" x="-20%" y="-20%" width="150%" height="150%"><feDropShadow dx="1.2" dy="1.5" stdDeviation="1.1" flood-color="#000" flood-opacity="0.35"/></filter></defs>
<rect x="1177.5" y="744.6" width="23" height="23" fill="url(#btng)" stroke="#b4b4b4" stroke-width="1"/>
<path d="M1185.6,752.4 L1181.8,748.5999999999999 M1185.2,748.5999999999999 H1181.8 V751.9999999999999" stroke="#666" stroke-width="1.3" fill="none"/>
<path d="M1192.8000000000002,752.4 L1196.6000000000001,748.5999999999999 M1193.2,748.5999999999999 H1196.6000000000001 V751.9999999999999" stroke="#666" stroke-width="1.3" fill="none"/>
<path d="M1185.6,759.8 L1181.8,763.6 M1185.2,763.6 H1181.8 V760.2" stroke="#666" stroke-width="1.3" fill="none"/>
<path d="M1192.8000000000002,759.8 L1196.6000000000001,763.6 M1193.2,763.6 H1196.6000000000001 V760.2" stroke="#666" stroke-width="1.3" fill="none"/>
<path d="M1300.70,956.90 L1300.70,1095.50 L1303.70,1095.50 L1303.70,1086.02 L1306.71,1086.02 L1306.71,1080.73 L1309.71,1080.73 L1309.71,1074.72 L1312.71,1074.72 L1312.71,1068.71 L1315.72,1068.71 L1315.72,1062.48 L1318.72,1062.48 L1318.72,1055.65 L1321.72,1055.65 L1321.72,1049.04 L1324.73,1049.04 L1324.73,1042.37 L1327.73,1042.37 L1327.73,1035.84 L1330.73,1035.84 L1330.73,1030.84 L1333.74,1030.84 L1333.74,1026.68 L1336.74,1026.68 L1336.74,1022.93 L1339.74,1022.93 L1339.74,1019.17 L1342.75,1019.17 L1342.75,1015.42 L1345.75,1015.42 L1345.75,1011.91 L1348.75,1011.91 L1348.75,1008.55 L1351.76,1008.55 L1351.76,1005.25 L1354.76,1005.25 L1354.76,1002.55 L1357.76,1002.55 L1357.76,999.85 L1360.77,999.85 L1360.77,997.19 L1363.77,997.19 L1363.77,995.19 L1366.77,995.19 L1366.77,993.19 L1369.77,993.19 L1369.78,991.19 L1372.78,991.19 L1372.78,989.18 L1375.78,989.18 L1375.78,987.18 L1378.78,987.18 L1378.78,985.18 L1381.79,985.18 L1381.79,983.72 L1384.79,983.72 L1384.79,982.26 L1387.79,982.26 L1387.79,980.80 L1390.80,980.80 L1390.80,979.50 L1393.80,979.50 L1393.80,978.38 L1396.80,978.38 L1396.80,977.26 L1399.81,977.26 L1399.81,976.15 L1402.81,976.15 L1402.81,974.89 L1405.81,974.89 L1405.81,973.61 L1408.82,973.61 L1408.82,972.33 L1411.82,972.33 L1411.82,971.06 L1414.82,971.06 L1414.82,969.72 L1417.83,969.72 L1417.83,968.37 L1420.83,968.37 L1420.83,967.01 L1423.83,967.01 L1423.83,965.66 L1426.84,965.66 L1426.84,964.37 L1429.84,964.37 L1429.84,963.10 L1432.84,963.10 L1432.84,961.82 L1435.85,961.82 L1435.85,960.54 L1438.85,960.54 L1438.85,959.52 L1441.85,959.52 L1441.85,958.58 L1444.86,958.58 L1444.86,957.63 L1447.86,957.63 L1447.86,956.72 L1450.86,956.72 L1450.86,955.92 L1453.87,955.92 L1453.87,955.12 L1456.87,955.12 L1456.87,954.32 L1459.87,954.32 L1459.87,953.52 L1462.88,953.52 L1462.88,952.69 L1465.88,952.69 L1465.88,951.85 L1468.88,951.85 L1468.88,951.01 L1471.89,951.01 L1471.89,950.17 L1474.89,950.17 L1474.89,949.33 L1477.89,949.33 L1477.89,948.60 L1480.90,948.60 L1480.90,947.93 L1483.90,947.93 L1483.90,947.27 L1486.90,947.27 L1486.90,946.61 L1489.91,946.61 L1489.91,945.95 L1492.91,945.95 L1492.91,945.12 L1495.91,945.12 L1495.91,944.14 L1498.92,944.14 L1498.92,943.17 L1501.92,943.17 L1501.92,942.19 L1504.92,942.19 L1504.92,941.18 L1507.92,941.18 L1507.92,940.13 L1510.93,940.13 L1510.93,939.08 L1513.93,939.08 L1513.93,938.02 L1516.93,938.02 L1516.93,936.57 L1519.94,936.57 L1519.94,934.61 L1522.94,934.61 L1522.94,932.53 L1525.94,932.53 L1525.94,930.28 L1528.95,930.28 L1528.95,927.93 L1531.95,927.93 L1531.95,925.43 L1534.95,925.43 L1534.95,922.92 L1537.96,922.92 L1537.96,920.34 L1540.96,920.34 L1540.96,917.61 L1543.96,917.61 L1543.96,914.88 L1546.97,914.88 L1546.97,911.99 L1549.97,911.99 L1549.97,902.04 L1552.97,902.04 L1552.97,890.15 L1555.98,890.15 L1555.98,880.69 L1558.98,880.69 L1558.98,868.95 L1561.98,868.95 L1561.98,859.79 L1564.99,859.79 L1564.99,849.11 L1567.99,849.11 L1567.99,839.54 L1570.99,839.54 L1570.99,828.83 L1574.00,828.83 L1574.00,824.07 L1577.00,824.07 L1577.00,956.90 Z" fill="#98d1f7"/>
<path d="M1300.70,956.90 V1095.50 M1303.70,956.90 V1086.02 M1306.71,956.90 V1080.73 M1309.71,956.90 V1074.72 M1312.71,956.90 V1068.71 M1315.72,956.90 V1062.48 M1318.72,956.90 V1055.65 M1321.72,956.90 V1049.04 M1324.73,956.90 V1042.37 M1327.73,956.90 V1035.84 M1330.73,956.90 V1030.84 M1333.74,956.90 V1026.68 M1336.74,956.90 V1022.93 M1339.74,956.90 V1019.17 M1342.75,956.90 V1015.42 M1345.75,956.90 V1011.91 M1348.75,956.90 V1008.55 M1351.76,956.90 V1005.25 M1354.76,956.90 V1002.55 M1357.76,956.90 V999.85 M1360.77,956.90 V997.19 M1363.77,956.90 V995.19 M1366.77,956.90 V993.19 M1369.78,956.90 V991.19 M1372.78,956.90 V989.18 M1375.78,956.90 V987.18 M1378.78,956.90 V985.18 M1381.79,956.90 V983.72 M1384.79,956.90 V982.26 M1387.79,956.90 V980.80 M1390.80,956.90 V979.50 M1393.80,956.90 V978.38 M1396.80,956.90 V977.26 M1399.81,956.90 V976.15 M1402.81,956.90 V974.89 M1405.81,956.90 V973.61 M1408.82,956.90 V972.33 M1411.82,956.90 V971.06 M1414.82,956.90 V969.72 M1417.83,956.90 V968.37 M1420.83,956.90 V967.01 M1423.83,956.90 V965.66 M1426.84,956.90 V964.37 M1429.84,956.90 V963.10 M1432.84,956.90 V961.82 M1435.85,956.90 V960.54 M1438.85,956.90 V959.52 M1441.85,956.90 V958.58 M1444.86,956.90 V957.63 M1447.86,956.90 V956.72 M1450.86,956.90 V955.92 M1453.87,956.90 V955.12 M1456.87,956.90 V954.32 M1459.87,956.90 V953.52 M1462.88,956.90 V952.69 M1465.88,956.90 V951.85 M1468.88,956.90 V951.01 M1471.89,956.90 V950.17 M1474.89,956.90 V949.33 M1477.89,956.90 V948.60 M1480.90,956.90 V947.93 M1483.90,956.90 V947.27 M1486.90,956.90 V946.61 M1489.91,956.90 V945.95 M1492.91,956.90 V945.12 M1495.91,956.90 V944.14 M1498.92,956.90 V943.17 M1501.92,956.90 V942.19 M1504.92,956.90 V941.18 M1507.92,956.90 V940.13 M1510.93,956.90 V939.08 M1513.93,956.90 V938.02 M1516.93,956.90 V936.57 M1519.94,956.90 V934.61 M1522.94,956.90 V932.53 M1525.94,956.90 V930.28 M1528.95,956.90 V927.93 M1531.95,956.90 V925.43 M1534.95,956.90 V922.92 M1537.96,956.90 V920.34 M1540.96,956.90 V917.61 M1543.96,956.90 V914.88 M1546.97,956.90 V911.99 M1549.97,956.90 V902.04 M1552.97,956.90 V890.15 M1555.98,956.90 V880.69 M1558.98,956.90 V868.95 M1561.98,956.90 V859.79 M1564.99,956.90 V849.11 M1567.99,956.90 V839.54 M1570.99,956.90 V828.83 M1574.00,956.90 V824.07 M1577.00,956.90 V824.07" stroke="#86bbe0" stroke-width="1.3" fill="none"/>
<line x1="1300.70" y1="956.90" x2="1577.00" y2="956.90" stroke="#7f9bb2" stroke-width="1" />
<line x1="1300.70" y1="956.90" x2="1300.70" y2="1095.50" stroke="#9a9a9a" stroke-width="1" />
<path d="M1300.70,1095.50 L1300.70,1095.50 L1303.70,1095.50 L1303.70,1086.02 L1306.71,1086.02 L1306.71,1080.73 L1309.71,1080.73 L1309.71,1074.72 L1312.71,1074.72 L1312.71,1068.71 L1315.72,1068.71 L1315.72,1062.48 L1318.72,1062.48 L1318.72,1055.65 L1321.72,1055.65 L1321.72,1049.04 L1324.73,1049.04 L1324.73,1042.37 L1327.73,1042.37 L1327.73,1035.84 L1330.73,1035.84 L1330.73,1030.84 L1333.74,1030.84 L1333.74,1026.68 L1336.74,1026.68 L1336.74,1022.93 L1339.74,1022.93 L1339.74,1019.17 L1342.75,1019.17 L1342.75,1015.42 L1345.75,1015.42 L1345.75,1011.91 L1348.75,1011.91 L1348.75,1008.55 L1351.76,1008.55 L1351.76,1005.25 L1354.76,1005.25 L1354.76,1002.55 L1357.76,1002.55 L1357.76,999.85 L1360.77,999.85 L1360.77,997.19 L1363.77,997.19 L1363.77,995.19 L1366.77,995.19 L1366.77,993.19 L1369.77,993.19 L1369.78,991.19 L1372.78,991.19 L1372.78,989.18 L1375.78,989.18 L1375.78,987.18 L1378.78,987.18 L1378.78,985.18 L1381.79,985.18 L1381.79,983.72 L1384.79,983.72 L1384.79,982.26 L1387.79,982.26 L1387.79,980.80 L1390.80,980.80 L1390.80,979.50 L1393.80,979.50 L1393.80,978.38 L1396.80,978.38 L1396.80,977.26 L1399.81,977.26 L1399.81,976.15 L1402.81,976.15 L1402.81,974.89 L1405.81,974.89 L1405.81,973.61 L1408.82,973.61 L1408.82,972.33 L1411.82,972.33 L1411.82,971.06 L1414.82,971.06 L1414.82,969.72 L1417.83,969.72 L1417.83,968.37 L1420.83,968.37 L1420.83,967.01 L1423.83,967.01 L1423.83,965.66 L1426.84,965.66 L1426.84,964.37 L1429.84,964.37 L1429.84,963.10 L1432.84,963.10 L1432.84,961.82 L1435.85,961.82 L1435.85,960.54 L1438.85,960.54 L1438.85,959.52 L1441.85,959.52 L1441.85,958.58 L1444.86,958.58 L1444.86,957.63 L1447.86,957.63 L1447.86,956.72 L1450.86,956.72 L1450.86,955.92 L1453.87,955.92 L1453.87,955.12 L1456.87,955.12 L1456.87,954.32 L1459.87,954.32 L1459.87,953.52 L1462.88,953.52 L1462.88,952.69 L1465.88,952.69 L1465.88,951.85 L1468.88,951.85 L1468.88,951.01 L1471.89,951.01 L1471.89,950.17 L1474.89,950.17 L1474.89,949.33 L1477.89,949.33 L1477.89,948.60 L1480.90,948.60 L1480.90,947.93 L1483.90,947.93 L1483.90,947.27 L1486.90,947.27 L1486.90,946.61 L1489.91,946.61 L1489.91,945.95 L1492.91,945.95 L1492.91,945.12 L1495.91,945.12 L1495.91,944.14 L1498.92,944.14 L1498.92,943.17 L1501.92,943.17 L1501.92,942.19 L1504.92,942.19 L1504.92,941.18 L1507.92,941.18 L1507.92,940.13 L1510.93,940.13 L1510.93,939.08 L1513.93,939.08 L1513.93,938.02 L1516.93,938.02 L1516.93,936.57 L1519.94,936.57 L1519.94,934.61 L1522.94,934.61 L1522.94,932.53 L1525.94,932.53 L1525.94,930.28 L1528.95,930.28 L1528.95,927.93 L1531.95,927.93 L1531.95,925.43 L1534.95,925.43 L1534.95,922.92 L1537.96,922.92 L1537.96,920.34 L1540.96,920.34 L1540.96,917.61 L1543.96,917.61 L1543.96,914.88 L1546.97,914.88 L1546.97,911.99 L1549.97,911.99 L1549.97,902.04 L1552.97,902.04 L1552.97,890.15 L1555.98,890.15 L1555.98,880.69 L1558.98,880.69 L1558.98,868.95 L1561.98,868.95 L1561.98,859.79 L1564.99,859.79 L1564.99,849.11 L1567.99,849.11 L1567.99,839.54 L1570.99,839.54 L1570.99,828.83 L1574.00,828.83 L1574.00,824.07 L1577.00,824.07" stroke="#1a1a1a" stroke-width="1.1" fill="none"/>
<text x="1301.00" y="769.60" font-size="11" fill="#000" textLength="102.60" lengthAdjust="spacingAndGlyphs">Normal stress [MPa]</text>
<ellipse cx="1555.2" cy="817.3" rx="28.6" ry="16.6" fill="none" stroke="#e81010" stroke-width="1.8" filter="url(#sh)"/>
<ellipse cx="1317" cy="1100.6" rx="24.8" ry="16.8" fill="none" stroke="#e81010" stroke-width="1.8" filter="url(#sh)"/>
<text x="1545.00" y="821.60" font-size="11" fill="#000" textLength="28.00" lengthAdjust="spacingAndGlyphs">314.2</text>
<text x="1302.00" y="1104.60" font-size="11" fill="#000" textLength="30.00" lengthAdjust="spacingAndGlyphs">-325.2</text>
<path d="M1714.40,949.00 L1714.40,1048.68 L1716.61,1048.68 L1716.61,1039.04 L1718.82,1039.04 L1718.82,1033.88 L1721.03,1033.88 L1721.03,1028.73 L1723.24,1028.73 L1723.24,1023.57 L1725.45,1023.57 L1725.45,1018.41 L1727.66,1018.41 L1727.66,1013.26 L1729.87,1013.26 L1729.87,1007.44 L1732.08,1007.44 L1732.08,1001.55 L1734.29,1001.55 L1734.29,995.66 L1736.50,995.66 L1736.50,989.77 L1738.71,989.77 L1738.71,983.87 L1740.92,983.87 L1740.92,977.42 L1743.13,977.42 L1743.13,970.78 L1745.34,970.78 L1745.34,963.98 L1747.55,963.98 L1747.55,956.85 L1749.76,956.85 L1749.76,949.17 L1751.97,949.17 L1751.97,940.58 L1754.18,940.58 L1754.18,935.05 L1756.39,935.05 L1756.39,931.03 L1758.60,931.03 L1758.60,927.60 L1760.81,927.60 L1760.81,924.06 L1763.02,924.06 L1763.02,920.53 L1765.23,920.53 L1765.23,917.29 L1767.43,917.29 L1767.43,914.52 L1769.64,914.52 L1769.64,911.79 L1771.85,911.79 L1771.85,909.32 L1774.06,909.32 L1774.06,906.84 L1776.27,906.84 L1776.27,904.48 L1778.48,904.48 L1778.48,902.46 L1780.69,902.46 L1780.69,900.44 L1782.90,900.44 L1782.90,898.42 L1785.11,898.42 L1785.11,896.43 L1787.32,896.43 L1787.32,894.54 L1789.53,894.54 L1789.53,892.65 L1791.74,892.65 L1791.74,890.75 L1793.95,890.75 L1793.95,889.13 L1796.16,889.13 L1796.16,888.19 L1798.37,888.19 L1798.37,887.25 L1800.58,887.25 L1800.58,886.31 L1802.79,886.31 L1802.79,885.37 L1805.00,885.37 L1805.00,884.52 L1807.21,884.52 L1807.21,883.70 L1809.42,883.70 L1809.42,882.88 L1811.63,882.88 L1811.63,882.06 L1813.84,882.06 L1813.84,880.99 L1816.05,880.99 L1816.05,879.84 L1818.26,879.84 L1818.26,878.69 L1820.47,878.69 L1820.47,877.25 L1822.68,877.25 L1822.68,875.78 L1824.89,875.78 L1824.89,874.31 L1827.10,874.31 L1827.10,872.98 L1829.31,872.98 L1829.31,871.82 L1831.52,871.82 L1831.52,870.66 L1833.73,870.66 L1833.73,869.49 L1835.94,869.49 L1835.94,868.55 L1838.15,868.55 L1838.15,868.79 L1840.36,868.79 L1840.36,869.04 L1842.57,869.04 L1842.57,869.31 L1844.78,869.31 L1844.78,869.90 L1846.99,869.90 L1846.99,870.49 L1849.20,870.49 L1849.20,871.08 L1851.41,871.08 L1851.41,871.98 L1853.62,871.98 L1853.62,873.04 L1855.83,873.04 L1855.83,874.10 L1858.04,874.10 L1858.04,877.30 L1860.25,877.30 L1860.25,881.07 L1862.46,881.07 L1862.46,885.49 L1864.67,885.49 L1864.67,889.90 L1866.88,889.90 L1866.88,893.87 L1869.08,893.87 L1869.08,897.73 L1871.29,897.73 L1871.29,901.60 L1873.50,901.60 L1873.50,905.47 L1875.71,905.47 L1875.71,910.09 L1877.92,910.09 L1877.92,916.72 L1880.13,916.72 L1880.13,923.77 L1882.34,923.77 L1882.34,931.14 L1884.55,931.14 L1884.55,938.50 L1886.76,938.50 L1886.76,945.92 L1888.97,945.92 L1888.97,953.65 L1891.18,953.65 L1891.18,961.02 L1893.39,961.02 L1893.39,968.39 L1895.60,968.39 L1895.60,975.75 L1897.81,975.75 L1897.81,983.12 L1900.02,983.12 L1900.02,990.48 L1902.23,990.48 L1902.23,997.85 L1904.44,997.85 L1904.44,1005.22 L1906.65,1005.22 L1906.65,1012.58 L1908.86,1012.58 L1908.86,1020.30 L1911.07,1020.30 L1911.07,1028.40 L1913.28,1028.40 L1913.28,1039.69 L1915.49,1039.69 L1915.49,1050.69 L1917.70,1050.69 L1917.70,949.00 Z" fill="#98d1f7"/>
<path d="M1714.40,949.00 V1048.68 M1716.61,949.00 V1039.04 M1718.82,949.00 V1033.88 M1721.03,949.00 V1028.73 M1723.24,949.00 V1023.57 M1725.45,949.00 V1018.41 M1727.66,949.00 V1013.26 M1729.87,949.00 V1007.44 M1732.08,949.00 V1001.55 M1734.29,949.00 V995.66 M1736.50,949.00 V989.77 M1738.71,949.00 V983.87 M1740.92,949.00 V977.42 M1743.13,949.00 V970.78 M1745.34,949.00 V963.98 M1747.55,949.00 V956.85 M1749.76,949.00 V949.17 M1751.97,949.00 V940.58 M1754.18,949.00 V935.05 M1756.39,949.00 V931.03 M1758.60,949.00 V927.60 M1760.81,949.00 V924.06 M1763.02,949.00 V920.53 M1765.23,949.00 V917.29 M1767.43,949.00 V914.52 M1769.64,949.00 V911.79 M1771.85,949.00 V909.32 M1774.06,949.00 V906.84 M1776.27,949.00 V904.48 M1778.48,949.00 V902.46 M1780.69,949.00 V900.44 M1782.90,949.00 V898.42 M1785.11,949.00 V896.43 M1787.32,949.00 V894.54 M1789.53,949.00 V892.65 M1791.74,949.00 V890.75 M1793.95,949.00 V889.13 M1796.16,949.00 V888.19 M1798.37,949.00 V887.25 M1800.58,949.00 V886.31 M1802.79,949.00 V885.37 M1805.00,949.00 V884.52 M1807.21,949.00 V883.70 M1809.42,949.00 V882.88 M1811.63,949.00 V882.06 M1813.84,949.00 V880.99 M1816.05,949.00 V879.84 M1818.26,949.00 V878.69 M1820.47,949.00 V877.25 M1822.68,949.00 V875.78 M1824.89,949.00 V874.31 M1827.10,949.00 V872.98 M1829.31,949.00 V871.82 M1831.52,949.00 V870.66 M1833.73,949.00 V869.49 M1835.94,949.00 V868.55 M1838.15,949.00 V868.79 M1840.36,949.00 V869.04 M1842.57,949.00 V869.31 M1844.78,949.00 V869.90 M1846.99,949.00 V870.49 M1849.20,949.00 V871.08 M1851.41,949.00 V871.98 M1853.62,949.00 V873.04 M1855.83,949.00 V874.10 M1858.04,949.00 V877.30 M1860.25,949.00 V881.07 M1862.46,949.00 V885.49 M1864.67,949.00 V889.90 M1866.88,949.00 V893.87 M1869.08,949.00 V897.73 M1871.29,949.00 V901.60 M1873.50,949.00 V905.47 M1875.71,949.00 V910.09 M1877.92,949.00 V916.72 M1880.13,949.00 V923.77 M1882.34,949.00 V931.14 M1884.55,949.00 V938.50 M1886.76,949.00 V945.92 M1888.97,949.00 V953.65 M1891.18,949.00 V961.02 M1893.39,949.00 V968.39 M1895.60,949.00 V975.75 M1897.81,949.00 V983.12 M1900.02,949.00 V990.48 M1902.23,949.00 V997.85 M1904.44,949.00 V1005.22 M1906.65,949.00 V1012.58 M1908.86,949.00 V1020.30 M1911.07,949.00 V1028.40 M1913.28,949.00 V1039.69 M1915.49,949.00 V1050.69 M1917.70,949.00 V1050.69" stroke="#86bbe0" stroke-width="1.3" fill="none"/>
<line x1="1714.40" y1="949.00" x2="1917.70" y2="949.00" stroke="#7f9bb2" stroke-width="1" />
<line x1="1714.40" y1="949.00" x2="1714.40" y2="1048.68" stroke="#9a9a9a" stroke-width="1" />
<path d="M1714.40,1048.68 L1714.40,1048.68 L1716.61,1048.68 L1716.61,1039.04 L1718.82,1039.04 L1718.82,1033.88 L1721.03,1033.88 L1721.03,1028.73 L1723.24,1028.73 L1723.24,1023.57 L1725.45,1023.57 L1725.45,1018.41 L1727.66,1018.41 L1727.66,1013.26 L1729.87,1013.26 L1729.87,1007.44 L1732.08,1007.44 L1732.08,1001.55 L1734.29,1001.55 L1734.29,995.66 L1736.50,995.66 L1736.50,989.77 L1738.71,989.77 L1738.71,983.87 L1740.92,983.87 L1740.92,977.42 L1743.13,977.42 L1743.13,970.78 L1745.34,970.78 L1745.34,963.98 L1747.55,963.98 L1747.55,956.85 L1749.76,956.85 L1749.76,949.17 L1751.97,949.17 L1751.97,940.58 L1754.18,940.58 L1754.18,935.05 L1756.39,935.05 L1756.39,931.03 L1758.60,931.03 L1758.60,927.60 L1760.81,927.60 L1760.81,924.06 L1763.02,924.06 L1763.02,920.53 L1765.23,920.53 L1765.23,917.29 L1767.43,917.29 L1767.43,914.52 L1769.64,914.52 L1769.64,911.79 L1771.85,911.79 L1771.85,909.32 L1774.06,909.32 L1774.06,906.84 L1776.27,906.84 L1776.27,904.48 L1778.48,904.48 L1778.48,902.46 L1780.69,902.46 L1780.69,900.44 L1782.90,900.44 L1782.90,898.42 L1785.11,898.42 L1785.11,896.43 L1787.32,896.43 L1787.32,894.54 L1789.53,894.54 L1789.53,892.65 L1791.74,892.65 L1791.74,890.75 L1793.95,890.75 L1793.95,889.13 L1796.16,889.13 L1796.16,888.19 L1798.37,888.19 L1798.37,887.25 L1800.58,887.25 L1800.58,886.31 L1802.79,886.31 L1802.79,885.37 L1805.00,885.37 L1805.00,884.52 L1807.21,884.52 L1807.21,883.70 L1809.42,883.70 L1809.42,882.88 L1811.63,882.88 L1811.63,882.06 L1813.84,882.06 L1813.84,880.99 L1816.05,880.99 L1816.05,879.84 L1818.26,879.84 L1818.26,878.69 L1820.47,878.69 L1820.47,877.25 L1822.68,877.25 L1822.68,875.78 L1824.89,875.78 L1824.89,874.31 L1827.10,874.31 L1827.10,872.98 L1829.31,872.98 L1829.31,871.82 L1831.52,871.82 L1831.52,870.66 L1833.73,870.66 L1833.73,869.49 L1835.94,869.49 L1835.94,868.55 L1838.15,868.55 L1838.15,868.79 L1840.36,868.79 L1840.36,869.04 L1842.57,869.04 L1842.57,869.31 L1844.78,869.31 L1844.78,869.90 L1846.99,869.90 L1846.99,870.49 L1849.20,870.49 L1849.20,871.08 L1851.41,871.08 L1851.41,871.98 L1853.62,871.98 L1853.62,873.04 L1855.83,873.04 L1855.83,874.10 L1858.04,874.10 L1858.04,877.30 L1860.25,877.30 L1860.25,881.07 L1862.46,881.07 L1862.46,885.49 L1864.67,885.49 L1864.67,889.90 L1866.88,889.90 L1866.88,893.87 L1869.08,893.87 L1869.08,897.73 L1871.29,897.73 L1871.29,901.60 L1873.50,901.60 L1873.50,905.47 L1875.71,905.47 L1875.71,910.09 L1877.92,910.09 L1877.92,916.72 L1880.13,916.72 L1880.13,923.77 L1882.34,923.77 L1882.34,931.14 L1884.55,931.14 L1884.55,938.50 L1886.76,938.50 L1886.76,945.92 L1888.97,945.92 L1888.97,953.65 L1891.18,953.65 L1891.18,961.02 L1893.39,961.02 L1893.39,968.39 L1895.60,968.39 L1895.60,975.75 L1897.81,975.75 L1897.81,983.12 L1900.02,983.12 L1900.02,990.48 L1902.23,990.48 L1902.23,997.85 L1904.44,997.85 L1904.44,1005.22 L1906.65,1005.22 L1906.65,1012.58 L1908.86,1012.58 L1908.86,1020.30 L1911.07,1020.30 L1911.07,1028.40 L1913.28,1028.40 L1913.28,1039.69 L1915.49,1039.69 L1915.49,1050.69 L1917.70,1050.69" stroke="#1a1a1a" stroke-width="1.1" fill="none"/>
<text x="1714.70" y="814.70" font-size="11" fill="#000" textLength="96.10" lengthAdjust="spacingAndGlyphs">Shear stress [MPa]</text>
<text x="1836.70" y="865.50" font-size="11" fill="#000" textLength="21.30" lengthAdjust="spacingAndGlyphs">47.4</text>
<text x="1890.00" y="1060.50" font-size="11" fill="#000" textLength="24.00" lengthAdjust="spacingAndGlyphs">-59.1</text>
</svg>
</body></html>
